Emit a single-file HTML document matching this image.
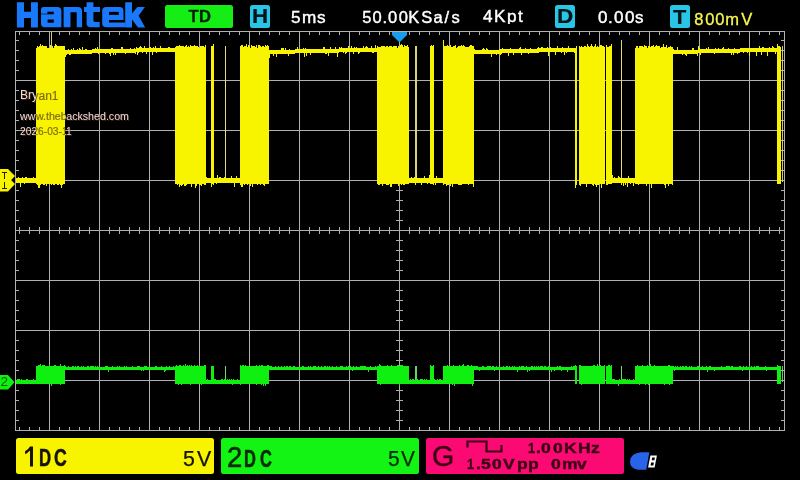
<!DOCTYPE html>
<html><head><meta charset="utf-8"><title>Hantek</title>
<style>
html,body{margin:0;padding:0;background:#000;}
body{width:800px;height:480px;position:relative;overflow:hidden;font-family:"Liberation Sans",sans-serif;}
.t{position:absolute;white-space:nowrap;line-height:1;transform-origin:0 0;}
#L{position:absolute;left:0;top:0;width:800px;height:480px;will-change:transform;}
.box{position:absolute;border-radius:2.5px;}
.wm{color:#f0d8e0;text-shadow:1px 1px 0 rgba(70,40,0,.9);}
</style></head><body><div id="L">
<svg width="800" height="480" viewBox="0 0 800 480" style="position:absolute;left:0;top:0"><g shape-rendering="crispEdges"><rect x="15" y="31" width="770" height="1" fill="#b0b0b0"/><rect x="15" y="430" width="770" height="1" fill="#b0b0b0"/><rect x="15" y="31" width="1" height="400" fill="#b0b0b0"/><rect x="784" y="31" width="1" height="400" fill="#b0b0b0"/><rect x="49" y="31" width="1" height="400" fill="#b0b0b0"/><rect x="99" y="31" width="1" height="400" fill="#b0b0b0"/><rect x="149" y="31" width="1" height="400" fill="#b0b0b0"/><rect x="199" y="31" width="1" height="400" fill="#b0b0b0"/><rect x="249" y="31" width="1" height="400" fill="#b0b0b0"/><rect x="299" y="31" width="1" height="400" fill="#b0b0b0"/><rect x="349" y="31" width="1" height="400" fill="#b0b0b0"/><rect x="399" y="31" width="1" height="400" fill="#b0b0b0"/><rect x="449" y="31" width="1" height="400" fill="#b0b0b0"/><rect x="499" y="31" width="1" height="400" fill="#b0b0b0"/><rect x="549" y="31" width="1" height="400" fill="#b0b0b0"/><rect x="599" y="31" width="1" height="400" fill="#b0b0b0"/><rect x="649" y="31" width="1" height="400" fill="#b0b0b0"/><rect x="699" y="31" width="1" height="400" fill="#b0b0b0"/><rect x="749" y="31" width="1" height="400" fill="#b0b0b0"/><rect x="15" y="80" width="770" height="1" fill="#b0b0b0"/><rect x="15" y="130" width="770" height="1" fill="#b0b0b0"/><rect x="15" y="180" width="770" height="1" fill="#b0b0b0"/><rect x="15" y="230" width="770" height="1" fill="#b0b0b0"/><rect x="15" y="280" width="770" height="1" fill="#b0b0b0"/><rect x="15" y="330" width="770" height="1" fill="#b0b0b0"/><rect x="15" y="380" width="770" height="1" fill="#b0b0b0"/><rect x="19" y="32" width="1" height="3" fill="#b0b0b0"/><rect x="19" y="427" width="1" height="3" fill="#b0b0b0"/><rect x="19" y="227" width="1" height="7" fill="#b0b0b0"/><rect x="29" y="32" width="1" height="3" fill="#b0b0b0"/><rect x="29" y="427" width="1" height="3" fill="#b0b0b0"/><rect x="29" y="227" width="1" height="7" fill="#b0b0b0"/><rect x="39" y="32" width="1" height="3" fill="#b0b0b0"/><rect x="39" y="427" width="1" height="3" fill="#b0b0b0"/><rect x="39" y="227" width="1" height="7" fill="#b0b0b0"/><rect x="49" y="32" width="1" height="3" fill="#b0b0b0"/><rect x="49" y="427" width="1" height="3" fill="#b0b0b0"/><rect x="49" y="227" width="1" height="7" fill="#b0b0b0"/><rect x="59" y="32" width="1" height="3" fill="#b0b0b0"/><rect x="59" y="427" width="1" height="3" fill="#b0b0b0"/><rect x="59" y="227" width="1" height="7" fill="#b0b0b0"/><rect x="69" y="32" width="1" height="3" fill="#b0b0b0"/><rect x="69" y="427" width="1" height="3" fill="#b0b0b0"/><rect x="69" y="227" width="1" height="7" fill="#b0b0b0"/><rect x="79" y="32" width="1" height="3" fill="#b0b0b0"/><rect x="79" y="427" width="1" height="3" fill="#b0b0b0"/><rect x="79" y="227" width="1" height="7" fill="#b0b0b0"/><rect x="89" y="32" width="1" height="3" fill="#b0b0b0"/><rect x="89" y="427" width="1" height="3" fill="#b0b0b0"/><rect x="89" y="227" width="1" height="7" fill="#b0b0b0"/><rect x="99" y="32" width="1" height="3" fill="#b0b0b0"/><rect x="99" y="427" width="1" height="3" fill="#b0b0b0"/><rect x="99" y="227" width="1" height="7" fill="#b0b0b0"/><rect x="109" y="32" width="1" height="3" fill="#b0b0b0"/><rect x="109" y="427" width="1" height="3" fill="#b0b0b0"/><rect x="109" y="227" width="1" height="7" fill="#b0b0b0"/><rect x="119" y="32" width="1" height="3" fill="#b0b0b0"/><rect x="119" y="427" width="1" height="3" fill="#b0b0b0"/><rect x="119" y="227" width="1" height="7" fill="#b0b0b0"/><rect x="129" y="32" width="1" height="3" fill="#b0b0b0"/><rect x="129" y="427" width="1" height="3" fill="#b0b0b0"/><rect x="129" y="227" width="1" height="7" fill="#b0b0b0"/><rect x="139" y="32" width="1" height="3" fill="#b0b0b0"/><rect x="139" y="427" width="1" height="3" fill="#b0b0b0"/><rect x="139" y="227" width="1" height="7" fill="#b0b0b0"/><rect x="149" y="32" width="1" height="3" fill="#b0b0b0"/><rect x="149" y="427" width="1" height="3" fill="#b0b0b0"/><rect x="149" y="227" width="1" height="7" fill="#b0b0b0"/><rect x="159" y="32" width="1" height="3" fill="#b0b0b0"/><rect x="159" y="427" width="1" height="3" fill="#b0b0b0"/><rect x="159" y="227" width="1" height="7" fill="#b0b0b0"/><rect x="169" y="32" width="1" height="3" fill="#b0b0b0"/><rect x="169" y="427" width="1" height="3" fill="#b0b0b0"/><rect x="169" y="227" width="1" height="7" fill="#b0b0b0"/><rect x="179" y="32" width="1" height="3" fill="#b0b0b0"/><rect x="179" y="427" width="1" height="3" fill="#b0b0b0"/><rect x="179" y="227" width="1" height="7" fill="#b0b0b0"/><rect x="189" y="32" width="1" height="3" fill="#b0b0b0"/><rect x="189" y="427" width="1" height="3" fill="#b0b0b0"/><rect x="189" y="227" width="1" height="7" fill="#b0b0b0"/><rect x="199" y="32" width="1" height="3" fill="#b0b0b0"/><rect x="199" y="427" width="1" height="3" fill="#b0b0b0"/><rect x="199" y="227" width="1" height="7" fill="#b0b0b0"/><rect x="209" y="32" width="1" height="3" fill="#b0b0b0"/><rect x="209" y="427" width="1" height="3" fill="#b0b0b0"/><rect x="209" y="227" width="1" height="7" fill="#b0b0b0"/><rect x="219" y="32" width="1" height="3" fill="#b0b0b0"/><rect x="219" y="427" width="1" height="3" fill="#b0b0b0"/><rect x="219" y="227" width="1" height="7" fill="#b0b0b0"/><rect x="229" y="32" width="1" height="3" fill="#b0b0b0"/><rect x="229" y="427" width="1" height="3" fill="#b0b0b0"/><rect x="229" y="227" width="1" height="7" fill="#b0b0b0"/><rect x="239" y="32" width="1" height="3" fill="#b0b0b0"/><rect x="239" y="427" width="1" height="3" fill="#b0b0b0"/><rect x="239" y="227" width="1" height="7" fill="#b0b0b0"/><rect x="249" y="32" width="1" height="3" fill="#b0b0b0"/><rect x="249" y="427" width="1" height="3" fill="#b0b0b0"/><rect x="249" y="227" width="1" height="7" fill="#b0b0b0"/><rect x="259" y="32" width="1" height="3" fill="#b0b0b0"/><rect x="259" y="427" width="1" height="3" fill="#b0b0b0"/><rect x="259" y="227" width="1" height="7" fill="#b0b0b0"/><rect x="269" y="32" width="1" height="3" fill="#b0b0b0"/><rect x="269" y="427" width="1" height="3" fill="#b0b0b0"/><rect x="269" y="227" width="1" height="7" fill="#b0b0b0"/><rect x="279" y="32" width="1" height="3" fill="#b0b0b0"/><rect x="279" y="427" width="1" height="3" fill="#b0b0b0"/><rect x="279" y="227" width="1" height="7" fill="#b0b0b0"/><rect x="289" y="32" width="1" height="3" fill="#b0b0b0"/><rect x="289" y="427" width="1" height="3" fill="#b0b0b0"/><rect x="289" y="227" width="1" height="7" fill="#b0b0b0"/><rect x="299" y="32" width="1" height="3" fill="#b0b0b0"/><rect x="299" y="427" width="1" height="3" fill="#b0b0b0"/><rect x="299" y="227" width="1" height="7" fill="#b0b0b0"/><rect x="309" y="32" width="1" height="3" fill="#b0b0b0"/><rect x="309" y="427" width="1" height="3" fill="#b0b0b0"/><rect x="309" y="227" width="1" height="7" fill="#b0b0b0"/><rect x="319" y="32" width="1" height="3" fill="#b0b0b0"/><rect x="319" y="427" width="1" height="3" fill="#b0b0b0"/><rect x="319" y="227" width="1" height="7" fill="#b0b0b0"/><rect x="329" y="32" width="1" height="3" fill="#b0b0b0"/><rect x="329" y="427" width="1" height="3" fill="#b0b0b0"/><rect x="329" y="227" width="1" height="7" fill="#b0b0b0"/><rect x="339" y="32" width="1" height="3" fill="#b0b0b0"/><rect x="339" y="427" width="1" height="3" fill="#b0b0b0"/><rect x="339" y="227" width="1" height="7" fill="#b0b0b0"/><rect x="349" y="32" width="1" height="3" fill="#b0b0b0"/><rect x="349" y="427" width="1" height="3" fill="#b0b0b0"/><rect x="349" y="227" width="1" height="7" fill="#b0b0b0"/><rect x="359" y="32" width="1" height="3" fill="#b0b0b0"/><rect x="359" y="427" width="1" height="3" fill="#b0b0b0"/><rect x="359" y="227" width="1" height="7" fill="#b0b0b0"/><rect x="369" y="32" width="1" height="3" fill="#b0b0b0"/><rect x="369" y="427" width="1" height="3" fill="#b0b0b0"/><rect x="369" y="227" width="1" height="7" fill="#b0b0b0"/><rect x="379" y="32" width="1" height="3" fill="#b0b0b0"/><rect x="379" y="427" width="1" height="3" fill="#b0b0b0"/><rect x="379" y="227" width="1" height="7" fill="#b0b0b0"/><rect x="389" y="32" width="1" height="3" fill="#b0b0b0"/><rect x="389" y="427" width="1" height="3" fill="#b0b0b0"/><rect x="389" y="227" width="1" height="7" fill="#b0b0b0"/><rect x="399" y="32" width="1" height="3" fill="#b0b0b0"/><rect x="399" y="427" width="1" height="3" fill="#b0b0b0"/><rect x="399" y="227" width="1" height="7" fill="#b0b0b0"/><rect x="409" y="32" width="1" height="3" fill="#b0b0b0"/><rect x="409" y="427" width="1" height="3" fill="#b0b0b0"/><rect x="409" y="227" width="1" height="7" fill="#b0b0b0"/><rect x="419" y="32" width="1" height="3" fill="#b0b0b0"/><rect x="419" y="427" width="1" height="3" fill="#b0b0b0"/><rect x="419" y="227" width="1" height="7" fill="#b0b0b0"/><rect x="429" y="32" width="1" height="3" fill="#b0b0b0"/><rect x="429" y="427" width="1" height="3" fill="#b0b0b0"/><rect x="429" y="227" width="1" height="7" fill="#b0b0b0"/><rect x="439" y="32" width="1" height="3" fill="#b0b0b0"/><rect x="439" y="427" width="1" height="3" fill="#b0b0b0"/><rect x="439" y="227" width="1" height="7" fill="#b0b0b0"/><rect x="449" y="32" width="1" height="3" fill="#b0b0b0"/><rect x="449" y="427" width="1" height="3" fill="#b0b0b0"/><rect x="449" y="227" width="1" height="7" fill="#b0b0b0"/><rect x="459" y="32" width="1" height="3" fill="#b0b0b0"/><rect x="459" y="427" width="1" height="3" fill="#b0b0b0"/><rect x="459" y="227" width="1" height="7" fill="#b0b0b0"/><rect x="469" y="32" width="1" height="3" fill="#b0b0b0"/><rect x="469" y="427" width="1" height="3" fill="#b0b0b0"/><rect x="469" y="227" width="1" height="7" fill="#b0b0b0"/><rect x="479" y="32" width="1" height="3" fill="#b0b0b0"/><rect x="479" y="427" width="1" height="3" fill="#b0b0b0"/><rect x="479" y="227" width="1" height="7" fill="#b0b0b0"/><rect x="489" y="32" width="1" height="3" fill="#b0b0b0"/><rect x="489" y="427" width="1" height="3" fill="#b0b0b0"/><rect x="489" y="227" width="1" height="7" fill="#b0b0b0"/><rect x="499" y="32" width="1" height="3" fill="#b0b0b0"/><rect x="499" y="427" width="1" height="3" fill="#b0b0b0"/><rect x="499" y="227" width="1" height="7" fill="#b0b0b0"/><rect x="509" y="32" width="1" height="3" fill="#b0b0b0"/><rect x="509" y="427" width="1" height="3" fill="#b0b0b0"/><rect x="509" y="227" width="1" height="7" fill="#b0b0b0"/><rect x="519" y="32" width="1" height="3" fill="#b0b0b0"/><rect x="519" y="427" width="1" height="3" fill="#b0b0b0"/><rect x="519" y="227" width="1" height="7" fill="#b0b0b0"/><rect x="529" y="32" width="1" height="3" fill="#b0b0b0"/><rect x="529" y="427" width="1" height="3" fill="#b0b0b0"/><rect x="529" y="227" width="1" height="7" fill="#b0b0b0"/><rect x="539" y="32" width="1" height="3" fill="#b0b0b0"/><rect x="539" y="427" width="1" height="3" fill="#b0b0b0"/><rect x="539" y="227" width="1" height="7" fill="#b0b0b0"/><rect x="549" y="32" width="1" height="3" fill="#b0b0b0"/><rect x="549" y="427" width="1" height="3" fill="#b0b0b0"/><rect x="549" y="227" width="1" height="7" fill="#b0b0b0"/><rect x="559" y="32" width="1" height="3" fill="#b0b0b0"/><rect x="559" y="427" width="1" height="3" fill="#b0b0b0"/><rect x="559" y="227" width="1" height="7" fill="#b0b0b0"/><rect x="569" y="32" width="1" height="3" fill="#b0b0b0"/><rect x="569" y="427" width="1" height="3" fill="#b0b0b0"/><rect x="569" y="227" width="1" height="7" fill="#b0b0b0"/><rect x="579" y="32" width="1" height="3" fill="#b0b0b0"/><rect x="579" y="427" width="1" height="3" fill="#b0b0b0"/><rect x="579" y="227" width="1" height="7" fill="#b0b0b0"/><rect x="589" y="32" width="1" height="3" fill="#b0b0b0"/><rect x="589" y="427" width="1" height="3" fill="#b0b0b0"/><rect x="589" y="227" width="1" height="7" fill="#b0b0b0"/><rect x="599" y="32" width="1" height="3" fill="#b0b0b0"/><rect x="599" y="427" width="1" height="3" fill="#b0b0b0"/><rect x="599" y="227" width="1" height="7" fill="#b0b0b0"/><rect x="609" y="32" width="1" height="3" fill="#b0b0b0"/><rect x="609" y="427" width="1" height="3" fill="#b0b0b0"/><rect x="609" y="227" width="1" height="7" fill="#b0b0b0"/><rect x="619" y="32" width="1" height="3" fill="#b0b0b0"/><rect x="619" y="427" width="1" height="3" fill="#b0b0b0"/><rect x="619" y="227" width="1" height="7" fill="#b0b0b0"/><rect x="629" y="32" width="1" height="3" fill="#b0b0b0"/><rect x="629" y="427" width="1" height="3" fill="#b0b0b0"/><rect x="629" y="227" width="1" height="7" fill="#b0b0b0"/><rect x="639" y="32" width="1" height="3" fill="#b0b0b0"/><rect x="639" y="427" width="1" height="3" fill="#b0b0b0"/><rect x="639" y="227" width="1" height="7" fill="#b0b0b0"/><rect x="649" y="32" width="1" height="3" fill="#b0b0b0"/><rect x="649" y="427" width="1" height="3" fill="#b0b0b0"/><rect x="649" y="227" width="1" height="7" fill="#b0b0b0"/><rect x="659" y="32" width="1" height="3" fill="#b0b0b0"/><rect x="659" y="427" width="1" height="3" fill="#b0b0b0"/><rect x="659" y="227" width="1" height="7" fill="#b0b0b0"/><rect x="669" y="32" width="1" height="3" fill="#b0b0b0"/><rect x="669" y="427" width="1" height="3" fill="#b0b0b0"/><rect x="669" y="227" width="1" height="7" fill="#b0b0b0"/><rect x="679" y="32" width="1" height="3" fill="#b0b0b0"/><rect x="679" y="427" width="1" height="3" fill="#b0b0b0"/><rect x="679" y="227" width="1" height="7" fill="#b0b0b0"/><rect x="689" y="32" width="1" height="3" fill="#b0b0b0"/><rect x="689" y="427" width="1" height="3" fill="#b0b0b0"/><rect x="689" y="227" width="1" height="7" fill="#b0b0b0"/><rect x="699" y="32" width="1" height="3" fill="#b0b0b0"/><rect x="699" y="427" width="1" height="3" fill="#b0b0b0"/><rect x="699" y="227" width="1" height="7" fill="#b0b0b0"/><rect x="709" y="32" width="1" height="3" fill="#b0b0b0"/><rect x="709" y="427" width="1" height="3" fill="#b0b0b0"/><rect x="709" y="227" width="1" height="7" fill="#b0b0b0"/><rect x="719" y="32" width="1" height="3" fill="#b0b0b0"/><rect x="719" y="427" width="1" height="3" fill="#b0b0b0"/><rect x="719" y="227" width="1" height="7" fill="#b0b0b0"/><rect x="729" y="32" width="1" height="3" fill="#b0b0b0"/><rect x="729" y="427" width="1" height="3" fill="#b0b0b0"/><rect x="729" y="227" width="1" height="7" fill="#b0b0b0"/><rect x="739" y="32" width="1" height="3" fill="#b0b0b0"/><rect x="739" y="427" width="1" height="3" fill="#b0b0b0"/><rect x="739" y="227" width="1" height="7" fill="#b0b0b0"/><rect x="749" y="32" width="1" height="3" fill="#b0b0b0"/><rect x="749" y="427" width="1" height="3" fill="#b0b0b0"/><rect x="749" y="227" width="1" height="7" fill="#b0b0b0"/><rect x="759" y="32" width="1" height="3" fill="#b0b0b0"/><rect x="759" y="427" width="1" height="3" fill="#b0b0b0"/><rect x="759" y="227" width="1" height="7" fill="#b0b0b0"/><rect x="769" y="32" width="1" height="3" fill="#b0b0b0"/><rect x="769" y="427" width="1" height="3" fill="#b0b0b0"/><rect x="769" y="227" width="1" height="7" fill="#b0b0b0"/><rect x="779" y="32" width="1" height="3" fill="#b0b0b0"/><rect x="779" y="427" width="1" height="3" fill="#b0b0b0"/><rect x="779" y="227" width="1" height="7" fill="#b0b0b0"/><rect x="16" y="40" width="3" height="1" fill="#b0b0b0"/><rect x="781" y="40" width="3" height="1" fill="#b0b0b0"/><rect x="16" y="50" width="3" height="1" fill="#b0b0b0"/><rect x="781" y="50" width="3" height="1" fill="#b0b0b0"/><rect x="396" y="50" width="7" height="1" fill="#b0b0b0"/><rect x="16" y="60" width="3" height="1" fill="#b0b0b0"/><rect x="781" y="60" width="3" height="1" fill="#b0b0b0"/><rect x="396" y="60" width="7" height="1" fill="#b0b0b0"/><rect x="16" y="70" width="3" height="1" fill="#b0b0b0"/><rect x="781" y="70" width="3" height="1" fill="#b0b0b0"/><rect x="396" y="70" width="7" height="1" fill="#b0b0b0"/><rect x="16" y="80" width="3" height="1" fill="#b0b0b0"/><rect x="781" y="80" width="3" height="1" fill="#b0b0b0"/><rect x="396" y="80" width="7" height="1" fill="#b0b0b0"/><rect x="16" y="90" width="3" height="1" fill="#b0b0b0"/><rect x="781" y="90" width="3" height="1" fill="#b0b0b0"/><rect x="396" y="90" width="7" height="1" fill="#b0b0b0"/><rect x="16" y="100" width="3" height="1" fill="#b0b0b0"/><rect x="781" y="100" width="3" height="1" fill="#b0b0b0"/><rect x="396" y="100" width="7" height="1" fill="#b0b0b0"/><rect x="16" y="110" width="3" height="1" fill="#b0b0b0"/><rect x="781" y="110" width="3" height="1" fill="#b0b0b0"/><rect x="396" y="110" width="7" height="1" fill="#b0b0b0"/><rect x="16" y="120" width="3" height="1" fill="#b0b0b0"/><rect x="781" y="120" width="3" height="1" fill="#b0b0b0"/><rect x="396" y="120" width="7" height="1" fill="#b0b0b0"/><rect x="16" y="130" width="3" height="1" fill="#b0b0b0"/><rect x="781" y="130" width="3" height="1" fill="#b0b0b0"/><rect x="396" y="130" width="7" height="1" fill="#b0b0b0"/><rect x="16" y="140" width="3" height="1" fill="#b0b0b0"/><rect x="781" y="140" width="3" height="1" fill="#b0b0b0"/><rect x="396" y="140" width="7" height="1" fill="#b0b0b0"/><rect x="16" y="150" width="3" height="1" fill="#b0b0b0"/><rect x="781" y="150" width="3" height="1" fill="#b0b0b0"/><rect x="396" y="150" width="7" height="1" fill="#b0b0b0"/><rect x="16" y="160" width="3" height="1" fill="#b0b0b0"/><rect x="781" y="160" width="3" height="1" fill="#b0b0b0"/><rect x="396" y="160" width="7" height="1" fill="#b0b0b0"/><rect x="16" y="170" width="3" height="1" fill="#b0b0b0"/><rect x="781" y="170" width="3" height="1" fill="#b0b0b0"/><rect x="396" y="170" width="7" height="1" fill="#b0b0b0"/><rect x="16" y="180" width="3" height="1" fill="#b0b0b0"/><rect x="781" y="180" width="3" height="1" fill="#b0b0b0"/><rect x="396" y="180" width="7" height="1" fill="#b0b0b0"/><rect x="16" y="190" width="3" height="1" fill="#b0b0b0"/><rect x="781" y="190" width="3" height="1" fill="#b0b0b0"/><rect x="396" y="190" width="7" height="1" fill="#b0b0b0"/><rect x="16" y="200" width="3" height="1" fill="#b0b0b0"/><rect x="781" y="200" width="3" height="1" fill="#b0b0b0"/><rect x="396" y="200" width="7" height="1" fill="#b0b0b0"/><rect x="16" y="210" width="3" height="1" fill="#b0b0b0"/><rect x="781" y="210" width="3" height="1" fill="#b0b0b0"/><rect x="396" y="210" width="7" height="1" fill="#b0b0b0"/><rect x="16" y="220" width="3" height="1" fill="#b0b0b0"/><rect x="781" y="220" width="3" height="1" fill="#b0b0b0"/><rect x="396" y="220" width="7" height="1" fill="#b0b0b0"/><rect x="16" y="230" width="3" height="1" fill="#b0b0b0"/><rect x="781" y="230" width="3" height="1" fill="#b0b0b0"/><rect x="396" y="230" width="7" height="1" fill="#b0b0b0"/><rect x="16" y="240" width="3" height="1" fill="#b0b0b0"/><rect x="781" y="240" width="3" height="1" fill="#b0b0b0"/><rect x="396" y="240" width="7" height="1" fill="#b0b0b0"/><rect x="16" y="250" width="3" height="1" fill="#b0b0b0"/><rect x="781" y="250" width="3" height="1" fill="#b0b0b0"/><rect x="396" y="250" width="7" height="1" fill="#b0b0b0"/><rect x="16" y="260" width="3" height="1" fill="#b0b0b0"/><rect x="781" y="260" width="3" height="1" fill="#b0b0b0"/><rect x="396" y="260" width="7" height="1" fill="#b0b0b0"/><rect x="16" y="270" width="3" height="1" fill="#b0b0b0"/><rect x="781" y="270" width="3" height="1" fill="#b0b0b0"/><rect x="396" y="270" width="7" height="1" fill="#b0b0b0"/><rect x="16" y="280" width="3" height="1" fill="#b0b0b0"/><rect x="781" y="280" width="3" height="1" fill="#b0b0b0"/><rect x="396" y="280" width="7" height="1" fill="#b0b0b0"/><rect x="16" y="290" width="3" height="1" fill="#b0b0b0"/><rect x="781" y="290" width="3" height="1" fill="#b0b0b0"/><rect x="396" y="290" width="7" height="1" fill="#b0b0b0"/><rect x="16" y="300" width="3" height="1" fill="#b0b0b0"/><rect x="781" y="300" width="3" height="1" fill="#b0b0b0"/><rect x="396" y="300" width="7" height="1" fill="#b0b0b0"/><rect x="16" y="310" width="3" height="1" fill="#b0b0b0"/><rect x="781" y="310" width="3" height="1" fill="#b0b0b0"/><rect x="396" y="310" width="7" height="1" fill="#b0b0b0"/><rect x="16" y="320" width="3" height="1" fill="#b0b0b0"/><rect x="781" y="320" width="3" height="1" fill="#b0b0b0"/><rect x="396" y="320" width="7" height="1" fill="#b0b0b0"/><rect x="16" y="330" width="3" height="1" fill="#b0b0b0"/><rect x="781" y="330" width="3" height="1" fill="#b0b0b0"/><rect x="396" y="330" width="7" height="1" fill="#b0b0b0"/><rect x="16" y="340" width="3" height="1" fill="#b0b0b0"/><rect x="781" y="340" width="3" height="1" fill="#b0b0b0"/><rect x="396" y="340" width="7" height="1" fill="#b0b0b0"/><rect x="16" y="350" width="3" height="1" fill="#b0b0b0"/><rect x="781" y="350" width="3" height="1" fill="#b0b0b0"/><rect x="396" y="350" width="7" height="1" fill="#b0b0b0"/><rect x="16" y="360" width="3" height="1" fill="#b0b0b0"/><rect x="781" y="360" width="3" height="1" fill="#b0b0b0"/><rect x="396" y="360" width="7" height="1" fill="#b0b0b0"/><rect x="16" y="370" width="3" height="1" fill="#b0b0b0"/><rect x="781" y="370" width="3" height="1" fill="#b0b0b0"/><rect x="396" y="370" width="7" height="1" fill="#b0b0b0"/><rect x="16" y="380" width="3" height="1" fill="#b0b0b0"/><rect x="781" y="380" width="3" height="1" fill="#b0b0b0"/><rect x="396" y="380" width="7" height="1" fill="#b0b0b0"/><rect x="16" y="390" width="3" height="1" fill="#b0b0b0"/><rect x="781" y="390" width="3" height="1" fill="#b0b0b0"/><rect x="396" y="390" width="7" height="1" fill="#b0b0b0"/><rect x="16" y="400" width="3" height="1" fill="#b0b0b0"/><rect x="781" y="400" width="3" height="1" fill="#b0b0b0"/><rect x="396" y="400" width="7" height="1" fill="#b0b0b0"/><rect x="16" y="410" width="3" height="1" fill="#b0b0b0"/><rect x="781" y="410" width="3" height="1" fill="#b0b0b0"/><rect x="396" y="410" width="7" height="1" fill="#b0b0b0"/><rect x="16" y="420" width="3" height="1" fill="#b0b0b0"/><rect x="781" y="420" width="3" height="1" fill="#b0b0b0"/><rect x="396" y="420" width="7" height="1" fill="#b0b0b0"/></g><g shape-rendering="crispEdges"><rect x="225" y="46" width="1" height="136" fill="#e2de80" opacity="1"/><rect x="415" y="46" width="2" height="136" fill="#e2de80" opacity="0.95"/><rect x="621" y="46" width="1" height="136" fill="#e2de80" opacity="1"/><rect x="782" y="46" width="1" height="136" fill="#e2de80" opacity="0.9"/><rect x="65" y="50" width="1" height="7" fill="#f8f400"/><rect x="66" y="50" width="1" height="5" fill="#f8f400"/><rect x="67" y="50" width="1" height="4" fill="#f8f400"/><rect x="68" y="49" width="1" height="5" fill="#f8f400"/><rect x="69" y="50" width="1" height="5" fill="#f8f400"/><rect x="70" y="50" width="1" height="5" fill="#f8f400"/><rect x="71" y="49" width="1" height="5" fill="#f8f400"/><rect x="72" y="50" width="1" height="4" fill="#f8f400"/><rect x="73" y="48" width="1" height="6" fill="#f8f400"/><rect x="74" y="50" width="1" height="4" fill="#f8f400"/><rect x="75" y="50" width="1" height="4" fill="#f8f400"/><rect x="76" y="50" width="1" height="4" fill="#f8f400"/><rect x="77" y="49" width="1" height="5" fill="#f8f400"/><rect x="78" y="50" width="1" height="4" fill="#f8f400"/><rect x="79" y="48" width="1" height="6" fill="#f8f400"/><rect x="80" y="49" width="1" height="5" fill="#f8f400"/><rect x="81" y="50" width="1" height="4" fill="#f8f400"/><rect x="82" y="47" width="1" height="7" fill="#f8f400"/><rect x="83" y="50" width="1" height="4" fill="#f8f400"/><rect x="84" y="50" width="1" height="4" fill="#f8f400"/><rect x="85" y="49" width="1" height="5" fill="#f8f400"/><rect x="86" y="49" width="1" height="5" fill="#f8f400"/><rect x="87" y="50" width="1" height="4" fill="#f8f400"/><rect x="88" y="50" width="1" height="4" fill="#f8f400"/><rect x="89" y="50" width="1" height="4" fill="#f8f400"/><rect x="90" y="50" width="1" height="4" fill="#f8f400"/><rect x="91" y="50" width="1" height="4" fill="#f8f400"/><rect x="92" y="49" width="1" height="4" fill="#f8f400"/><rect x="93" y="49" width="1" height="4" fill="#f8f400"/><rect x="94" y="49" width="1" height="4" fill="#f8f400"/><rect x="95" y="48" width="1" height="5" fill="#f8f400"/><rect x="96" y="49" width="1" height="4" fill="#f8f400"/><rect x="97" y="47" width="1" height="6" fill="#f8f400"/><rect x="98" y="49" width="1" height="5" fill="#f8f400"/><rect x="99" y="49" width="1" height="4" fill="#f8f400"/><rect x="100" y="49" width="1" height="4" fill="#f8f400"/><rect x="101" y="49" width="1" height="4" fill="#f8f400"/><rect x="102" y="49" width="1" height="4" fill="#f8f400"/><rect x="103" y="49" width="1" height="4" fill="#f8f400"/><rect x="104" y="49" width="1" height="4" fill="#f8f400"/><rect x="105" y="49" width="1" height="5" fill="#f8f400"/><rect x="106" y="49" width="1" height="4" fill="#f8f400"/><rect x="107" y="49" width="1" height="4" fill="#f8f400"/><rect x="108" y="49" width="1" height="4" fill="#f8f400"/><rect x="109" y="49" width="1" height="5" fill="#f8f400"/><rect x="110" y="49" width="1" height="7" fill="#f8f400"/><rect x="111" y="48" width="1" height="5" fill="#f8f400"/><rect x="112" y="48" width="1" height="5" fill="#f8f400"/><rect x="113" y="49" width="1" height="6" fill="#f8f400"/><rect x="114" y="49" width="1" height="4" fill="#f8f400"/><rect x="115" y="49" width="1" height="6" fill="#f8f400"/><rect x="116" y="49" width="1" height="4" fill="#f8f400"/><rect x="117" y="49" width="1" height="4" fill="#f8f400"/><rect x="118" y="49" width="1" height="4" fill="#f8f400"/><rect x="119" y="49" width="1" height="4" fill="#f8f400"/><rect x="120" y="49" width="1" height="4" fill="#f8f400"/><rect x="121" y="47" width="1" height="6" fill="#f8f400"/><rect x="122" y="47" width="1" height="6" fill="#f8f400"/><rect x="123" y="49" width="1" height="4" fill="#f8f400"/><rect x="124" y="49" width="1" height="4" fill="#f8f400"/><rect x="125" y="49" width="1" height="5" fill="#f8f400"/><rect x="126" y="49" width="1" height="4" fill="#f8f400"/><rect x="127" y="49" width="1" height="4" fill="#f8f400"/><rect x="128" y="49" width="1" height="4" fill="#f8f400"/><rect x="129" y="49" width="1" height="4" fill="#f8f400"/><rect x="130" y="48" width="1" height="5" fill="#f8f400"/><rect x="131" y="49" width="1" height="4" fill="#f8f400"/><rect x="132" y="49" width="1" height="4" fill="#f8f400"/><rect x="133" y="49" width="1" height="4" fill="#f8f400"/><rect x="134" y="48" width="1" height="5" fill="#f8f400"/><rect x="135" y="49" width="1" height="5" fill="#f8f400"/><rect x="136" y="47" width="1" height="5" fill="#f8f400"/><rect x="137" y="48" width="1" height="7" fill="#f8f400"/><rect x="138" y="48" width="1" height="5" fill="#f8f400"/><rect x="139" y="47" width="1" height="5" fill="#f8f400"/><rect x="140" y="46" width="1" height="6" fill="#f8f400"/><rect x="141" y="47" width="1" height="5" fill="#f8f400"/><rect x="142" y="48" width="1" height="5" fill="#f8f400"/><rect x="143" y="48" width="1" height="4" fill="#f8f400"/><rect x="144" y="46" width="1" height="6" fill="#f8f400"/><rect x="145" y="48" width="1" height="4" fill="#f8f400"/><rect x="146" y="48" width="1" height="6" fill="#f8f400"/><rect x="147" y="48" width="1" height="4" fill="#f8f400"/><rect x="148" y="48" width="1" height="4" fill="#f8f400"/><rect x="149" y="47" width="1" height="5" fill="#f8f400"/><rect x="150" y="47" width="1" height="5" fill="#f8f400"/><rect x="151" y="48" width="1" height="4" fill="#f8f400"/><rect x="152" y="48" width="1" height="7" fill="#f8f400"/><rect x="153" y="47" width="1" height="5" fill="#f8f400"/><rect x="154" y="48" width="1" height="4" fill="#f8f400"/><rect x="155" y="46" width="1" height="6" fill="#f8f400"/><rect x="156" y="48" width="1" height="5" fill="#f8f400"/><rect x="157" y="48" width="1" height="4" fill="#f8f400"/><rect x="158" y="48" width="1" height="4" fill="#f8f400"/><rect x="159" y="48" width="1" height="4" fill="#f8f400"/><rect x="160" y="46" width="1" height="6" fill="#f8f400"/><rect x="161" y="48" width="1" height="4" fill="#f8f400"/><rect x="162" y="48" width="1" height="4" fill="#f8f400"/><rect x="163" y="48" width="1" height="4" fill="#f8f400"/><rect x="164" y="48" width="1" height="4" fill="#f8f400"/><rect x="165" y="48" width="1" height="4" fill="#f8f400"/><rect x="166" y="48" width="1" height="4" fill="#f8f400"/><rect x="167" y="48" width="1" height="4" fill="#f8f400"/><rect x="168" y="47" width="1" height="5" fill="#f8f400"/><rect x="169" y="47" width="1" height="5" fill="#f8f400"/><rect x="170" y="48" width="1" height="4" fill="#f8f400"/><rect x="171" y="48" width="1" height="4" fill="#f8f400"/><rect x="172" y="48" width="1" height="4" fill="#f8f400"/><rect x="173" y="48" width="1" height="4" fill="#f8f400"/><rect x="174" y="48" width="1" height="4" fill="#f8f400"/><rect x="269" y="50" width="1" height="8" fill="#f8f400"/><rect x="270" y="50" width="1" height="4" fill="#f8f400"/><rect x="271" y="50" width="1" height="4" fill="#f8f400"/><rect x="272" y="50" width="1" height="4" fill="#f8f400"/><rect x="273" y="50" width="1" height="6" fill="#f8f400"/><rect x="274" y="50" width="1" height="4" fill="#f8f400"/><rect x="275" y="50" width="1" height="4" fill="#f8f400"/><rect x="276" y="50" width="1" height="7" fill="#f8f400"/><rect x="277" y="50" width="1" height="4" fill="#f8f400"/><rect x="278" y="50" width="1" height="4" fill="#f8f400"/><rect x="279" y="50" width="1" height="4" fill="#f8f400"/><rect x="280" y="50" width="1" height="4" fill="#f8f400"/><rect x="281" y="48" width="1" height="6" fill="#f8f400"/><rect x="282" y="48" width="1" height="6" fill="#f8f400"/><rect x="283" y="48" width="1" height="6" fill="#f8f400"/><rect x="284" y="50" width="1" height="4" fill="#f8f400"/><rect x="285" y="48" width="1" height="6" fill="#f8f400"/><rect x="286" y="50" width="1" height="4" fill="#f8f400"/><rect x="287" y="50" width="1" height="4" fill="#f8f400"/><rect x="288" y="50" width="1" height="6" fill="#f8f400"/><rect x="289" y="49" width="1" height="5" fill="#f8f400"/><rect x="290" y="50" width="1" height="4" fill="#f8f400"/><rect x="291" y="50" width="1" height="4" fill="#f8f400"/><rect x="292" y="50" width="1" height="4" fill="#f8f400"/><rect x="293" y="50" width="1" height="4" fill="#f8f400"/><rect x="294" y="50" width="1" height="4" fill="#f8f400"/><rect x="295" y="49" width="1" height="4" fill="#f8f400"/><rect x="296" y="49" width="1" height="4" fill="#f8f400"/><rect x="297" y="47" width="1" height="6" fill="#f8f400"/><rect x="298" y="49" width="1" height="4" fill="#f8f400"/><rect x="299" y="49" width="1" height="4" fill="#f8f400"/><rect x="300" y="49" width="1" height="4" fill="#f8f400"/><rect x="301" y="49" width="1" height="4" fill="#f8f400"/><rect x="302" y="49" width="1" height="4" fill="#f8f400"/><rect x="303" y="48" width="1" height="5" fill="#f8f400"/><rect x="304" y="49" width="1" height="8" fill="#f8f400"/><rect x="305" y="48" width="1" height="5" fill="#f8f400"/><rect x="306" y="49" width="1" height="7" fill="#f8f400"/><rect x="307" y="49" width="1" height="4" fill="#f8f400"/><rect x="308" y="49" width="1" height="4" fill="#f8f400"/><rect x="309" y="49" width="1" height="4" fill="#f8f400"/><rect x="310" y="49" width="1" height="6" fill="#f8f400"/><rect x="311" y="49" width="1" height="4" fill="#f8f400"/><rect x="312" y="49" width="1" height="4" fill="#f8f400"/><rect x="313" y="49" width="1" height="4" fill="#f8f400"/><rect x="314" y="49" width="1" height="4" fill="#f8f400"/><rect x="315" y="49" width="1" height="4" fill="#f8f400"/><rect x="316" y="49" width="1" height="4" fill="#f8f400"/><rect x="317" y="49" width="1" height="4" fill="#f8f400"/><rect x="318" y="49" width="1" height="4" fill="#f8f400"/><rect x="319" y="49" width="1" height="4" fill="#f8f400"/><rect x="320" y="49" width="1" height="4" fill="#f8f400"/><rect x="321" y="49" width="1" height="4" fill="#f8f400"/><rect x="322" y="49" width="1" height="4" fill="#f8f400"/><rect x="323" y="47" width="1" height="6" fill="#f8f400"/><rect x="324" y="47" width="1" height="6" fill="#f8f400"/><rect x="325" y="49" width="1" height="5" fill="#f8f400"/><rect x="326" y="49" width="1" height="5" fill="#f8f400"/><rect x="327" y="49" width="1" height="4" fill="#f8f400"/><rect x="328" y="49" width="1" height="7" fill="#f8f400"/><rect x="329" y="49" width="1" height="4" fill="#f8f400"/><rect x="330" y="47" width="1" height="6" fill="#f8f400"/><rect x="331" y="49" width="1" height="4" fill="#f8f400"/><rect x="332" y="49" width="1" height="4" fill="#f8f400"/><rect x="333" y="49" width="1" height="4" fill="#f8f400"/><rect x="334" y="49" width="1" height="4" fill="#f8f400"/><rect x="335" y="47" width="1" height="6" fill="#f8f400"/><rect x="336" y="49" width="1" height="4" fill="#f8f400"/><rect x="337" y="49" width="1" height="8" fill="#f8f400"/><rect x="338" y="49" width="1" height="4" fill="#f8f400"/><rect x="339" y="47" width="1" height="5" fill="#f8f400"/><rect x="340" y="48" width="1" height="4" fill="#f8f400"/><rect x="341" y="47" width="1" height="5" fill="#f8f400"/><rect x="342" y="48" width="1" height="4" fill="#f8f400"/><rect x="343" y="48" width="1" height="5" fill="#f8f400"/><rect x="344" y="48" width="1" height="4" fill="#f8f400"/><rect x="345" y="48" width="1" height="6" fill="#f8f400"/><rect x="346" y="48" width="1" height="5" fill="#f8f400"/><rect x="347" y="48" width="1" height="4" fill="#f8f400"/><rect x="348" y="46" width="1" height="6" fill="#f8f400"/><rect x="349" y="48" width="1" height="4" fill="#f8f400"/><rect x="350" y="48" width="1" height="4" fill="#f8f400"/><rect x="351" y="46" width="1" height="6" fill="#f8f400"/><rect x="352" y="48" width="1" height="4" fill="#f8f400"/><rect x="353" y="48" width="1" height="6" fill="#f8f400"/><rect x="354" y="47" width="1" height="5" fill="#f8f400"/><rect x="355" y="48" width="1" height="4" fill="#f8f400"/><rect x="356" y="47" width="1" height="5" fill="#f8f400"/><rect x="357" y="48" width="1" height="4" fill="#f8f400"/><rect x="358" y="48" width="1" height="6" fill="#f8f400"/><rect x="359" y="48" width="1" height="5" fill="#f8f400"/><rect x="360" y="48" width="1" height="4" fill="#f8f400"/><rect x="361" y="48" width="1" height="4" fill="#f8f400"/><rect x="362" y="48" width="1" height="4" fill="#f8f400"/><rect x="363" y="46" width="1" height="6" fill="#f8f400"/><rect x="364" y="48" width="1" height="4" fill="#f8f400"/><rect x="365" y="47" width="1" height="5" fill="#f8f400"/><rect x="366" y="46" width="1" height="6" fill="#f8f400"/><rect x="367" y="47" width="1" height="5" fill="#f8f400"/><rect x="368" y="48" width="1" height="4" fill="#f8f400"/><rect x="369" y="48" width="1" height="4" fill="#f8f400"/><rect x="370" y="48" width="1" height="4" fill="#f8f400"/><rect x="371" y="46" width="1" height="6" fill="#f8f400"/><rect x="372" y="48" width="1" height="5" fill="#f8f400"/><rect x="373" y="48" width="1" height="5" fill="#f8f400"/><rect x="374" y="48" width="1" height="4" fill="#f8f400"/><rect x="375" y="45" width="1" height="7" fill="#f8f400"/><rect x="376" y="48" width="1" height="4" fill="#f8f400"/><rect x="474" y="49" width="1" height="5" fill="#f8f400"/><rect x="475" y="50" width="1" height="4" fill="#f8f400"/><rect x="476" y="50" width="1" height="4" fill="#f8f400"/><rect x="477" y="50" width="1" height="4" fill="#f8f400"/><rect x="478" y="50" width="1" height="4" fill="#f8f400"/><rect x="479" y="50" width="1" height="4" fill="#f8f400"/><rect x="480" y="50" width="1" height="4" fill="#f8f400"/><rect x="481" y="50" width="1" height="4" fill="#f8f400"/><rect x="482" y="49" width="1" height="5" fill="#f8f400"/><rect x="483" y="48" width="1" height="6" fill="#f8f400"/><rect x="484" y="49" width="1" height="5" fill="#f8f400"/><rect x="485" y="50" width="1" height="4" fill="#f8f400"/><rect x="486" y="48" width="1" height="6" fill="#f8f400"/><rect x="487" y="49" width="1" height="5" fill="#f8f400"/><rect x="488" y="50" width="1" height="4" fill="#f8f400"/><rect x="489" y="50" width="1" height="4" fill="#f8f400"/><rect x="490" y="50" width="1" height="4" fill="#f8f400"/><rect x="491" y="50" width="1" height="7" fill="#f8f400"/><rect x="492" y="50" width="1" height="4" fill="#f8f400"/><rect x="493" y="50" width="1" height="4" fill="#f8f400"/><rect x="494" y="50" width="1" height="4" fill="#f8f400"/><rect x="495" y="50" width="1" height="4" fill="#f8f400"/><rect x="496" y="50" width="1" height="5" fill="#f8f400"/><rect x="497" y="50" width="1" height="4" fill="#f8f400"/><rect x="498" y="50" width="1" height="4" fill="#f8f400"/><rect x="499" y="49" width="1" height="5" fill="#f8f400"/><rect x="500" y="49" width="1" height="6" fill="#f8f400"/><rect x="501" y="49" width="1" height="5" fill="#f8f400"/><rect x="502" y="48" width="1" height="5" fill="#f8f400"/><rect x="503" y="49" width="1" height="4" fill="#f8f400"/><rect x="504" y="49" width="1" height="4" fill="#f8f400"/><rect x="505" y="49" width="1" height="4" fill="#f8f400"/><rect x="506" y="49" width="1" height="4" fill="#f8f400"/><rect x="507" y="49" width="1" height="4" fill="#f8f400"/><rect x="508" y="49" width="1" height="7" fill="#f8f400"/><rect x="509" y="49" width="1" height="4" fill="#f8f400"/><rect x="510" y="48" width="1" height="5" fill="#f8f400"/><rect x="511" y="49" width="1" height="4" fill="#f8f400"/><rect x="512" y="49" width="1" height="4" fill="#f8f400"/><rect x="513" y="49" width="1" height="6" fill="#f8f400"/><rect x="514" y="49" width="1" height="4" fill="#f8f400"/><rect x="515" y="49" width="1" height="4" fill="#f8f400"/><rect x="516" y="49" width="1" height="4" fill="#f8f400"/><rect x="517" y="49" width="1" height="4" fill="#f8f400"/><rect x="518" y="49" width="1" height="4" fill="#f8f400"/><rect x="519" y="48" width="1" height="5" fill="#f8f400"/><rect x="520" y="47" width="1" height="6" fill="#f8f400"/><rect x="521" y="49" width="1" height="6" fill="#f8f400"/><rect x="522" y="49" width="1" height="4" fill="#f8f400"/><rect x="523" y="49" width="1" height="4" fill="#f8f400"/><rect x="524" y="49" width="1" height="4" fill="#f8f400"/><rect x="525" y="48" width="1" height="5" fill="#f8f400"/><rect x="526" y="49" width="1" height="4" fill="#f8f400"/><rect x="527" y="49" width="1" height="4" fill="#f8f400"/><rect x="528" y="49" width="1" height="5" fill="#f8f400"/><rect x="529" y="49" width="1" height="4" fill="#f8f400"/><rect x="530" y="48" width="1" height="5" fill="#f8f400"/><rect x="531" y="49" width="1" height="4" fill="#f8f400"/><rect x="532" y="49" width="1" height="4" fill="#f8f400"/><rect x="533" y="49" width="1" height="4" fill="#f8f400"/><rect x="534" y="49" width="1" height="4" fill="#f8f400"/><rect x="535" y="49" width="1" height="4" fill="#f8f400"/><rect x="536" y="49" width="1" height="4" fill="#f8f400"/><rect x="537" y="48" width="1" height="5" fill="#f8f400"/><rect x="538" y="47" width="1" height="6" fill="#f8f400"/><rect x="539" y="48" width="1" height="4" fill="#f8f400"/><rect x="540" y="48" width="1" height="4" fill="#f8f400"/><rect x="541" y="47" width="1" height="5" fill="#f8f400"/><rect x="542" y="47" width="1" height="5" fill="#f8f400"/><rect x="543" y="48" width="1" height="4" fill="#f8f400"/><rect x="544" y="48" width="1" height="4" fill="#f8f400"/><rect x="545" y="48" width="1" height="4" fill="#f8f400"/><rect x="546" y="48" width="1" height="4" fill="#f8f400"/><rect x="547" y="47" width="1" height="5" fill="#f8f400"/><rect x="548" y="48" width="1" height="8" fill="#f8f400"/><rect x="549" y="48" width="1" height="4" fill="#f8f400"/><rect x="550" y="47" width="1" height="5" fill="#f8f400"/><rect x="551" y="48" width="1" height="4" fill="#f8f400"/><rect x="552" y="48" width="1" height="4" fill="#f8f400"/><rect x="553" y="48" width="1" height="4" fill="#f8f400"/><rect x="554" y="48" width="1" height="4" fill="#f8f400"/><rect x="555" y="48" width="1" height="7" fill="#f8f400"/><rect x="556" y="48" width="1" height="4" fill="#f8f400"/><rect x="557" y="46" width="1" height="6" fill="#f8f400"/><rect x="558" y="48" width="1" height="4" fill="#f8f400"/><rect x="559" y="48" width="1" height="4" fill="#f8f400"/><rect x="560" y="48" width="1" height="4" fill="#f8f400"/><rect x="561" y="48" width="1" height="5" fill="#f8f400"/><rect x="562" y="47" width="1" height="5" fill="#f8f400"/><rect x="563" y="48" width="1" height="4" fill="#f8f400"/><rect x="564" y="48" width="1" height="7" fill="#f8f400"/><rect x="565" y="48" width="1" height="4" fill="#f8f400"/><rect x="566" y="48" width="1" height="5" fill="#f8f400"/><rect x="567" y="48" width="1" height="4" fill="#f8f400"/><rect x="568" y="46" width="1" height="6" fill="#f8f400"/><rect x="569" y="48" width="1" height="4" fill="#f8f400"/><rect x="570" y="48" width="1" height="4" fill="#f8f400"/><rect x="571" y="48" width="1" height="4" fill="#f8f400"/><rect x="572" y="48" width="1" height="4" fill="#f8f400"/><rect x="573" y="48" width="1" height="4" fill="#f8f400"/><rect x="574" y="48" width="1" height="5" fill="#f8f400"/><rect x="673" y="49" width="1" height="5" fill="#f8f400"/><rect x="674" y="50" width="1" height="4" fill="#f8f400"/><rect x="675" y="50" width="1" height="4" fill="#f8f400"/><rect x="676" y="50" width="1" height="4" fill="#f8f400"/><rect x="677" y="47" width="1" height="7" fill="#f8f400"/><rect x="678" y="50" width="1" height="4" fill="#f8f400"/><rect x="679" y="50" width="1" height="4" fill="#f8f400"/><rect x="680" y="50" width="1" height="4" fill="#f8f400"/><rect x="681" y="50" width="1" height="4" fill="#f8f400"/><rect x="682" y="50" width="1" height="5" fill="#f8f400"/><rect x="683" y="50" width="1" height="4" fill="#f8f400"/><rect x="684" y="50" width="1" height="4" fill="#f8f400"/><rect x="685" y="50" width="1" height="5" fill="#f8f400"/><rect x="686" y="50" width="1" height="6" fill="#f8f400"/><rect x="687" y="50" width="1" height="4" fill="#f8f400"/><rect x="688" y="50" width="1" height="4" fill="#f8f400"/><rect x="689" y="50" width="1" height="4" fill="#f8f400"/><rect x="690" y="50" width="1" height="4" fill="#f8f400"/><rect x="691" y="50" width="1" height="4" fill="#f8f400"/><rect x="692" y="48" width="1" height="6" fill="#f8f400"/><rect x="693" y="48" width="1" height="6" fill="#f8f400"/><rect x="694" y="50" width="1" height="4" fill="#f8f400"/><rect x="695" y="50" width="1" height="4" fill="#f8f400"/><rect x="696" y="50" width="1" height="4" fill="#f8f400"/><rect x="697" y="50" width="1" height="6" fill="#f8f400"/><rect x="698" y="46" width="1" height="7" fill="#f8f400"/><rect x="699" y="48" width="1" height="5" fill="#f8f400"/><rect x="700" y="49" width="1" height="6" fill="#f8f400"/><rect x="701" y="49" width="1" height="4" fill="#f8f400"/><rect x="702" y="49" width="1" height="4" fill="#f8f400"/><rect x="703" y="49" width="1" height="4" fill="#f8f400"/><rect x="704" y="49" width="1" height="4" fill="#f8f400"/><rect x="705" y="49" width="1" height="4" fill="#f8f400"/><rect x="706" y="48" width="1" height="5" fill="#f8f400"/><rect x="707" y="49" width="1" height="4" fill="#f8f400"/><rect x="708" y="47" width="1" height="6" fill="#f8f400"/><rect x="709" y="49" width="1" height="4" fill="#f8f400"/><rect x="710" y="49" width="1" height="4" fill="#f8f400"/><rect x="711" y="49" width="1" height="4" fill="#f8f400"/><rect x="712" y="49" width="1" height="4" fill="#f8f400"/><rect x="713" y="49" width="1" height="4" fill="#f8f400"/><rect x="714" y="49" width="1" height="5" fill="#f8f400"/><rect x="715" y="48" width="1" height="5" fill="#f8f400"/><rect x="716" y="49" width="1" height="4" fill="#f8f400"/><rect x="717" y="49" width="1" height="4" fill="#f8f400"/><rect x="718" y="48" width="1" height="5" fill="#f8f400"/><rect x="719" y="49" width="1" height="4" fill="#f8f400"/><rect x="720" y="49" width="1" height="4" fill="#f8f400"/><rect x="721" y="49" width="1" height="4" fill="#f8f400"/><rect x="722" y="48" width="1" height="5" fill="#f8f400"/><rect x="723" y="47" width="1" height="6" fill="#f8f400"/><rect x="724" y="49" width="1" height="4" fill="#f8f400"/><rect x="725" y="49" width="1" height="4" fill="#f8f400"/><rect x="726" y="49" width="1" height="4" fill="#f8f400"/><rect x="727" y="49" width="1" height="4" fill="#f8f400"/><rect x="728" y="48" width="1" height="5" fill="#f8f400"/><rect x="729" y="49" width="1" height="4" fill="#f8f400"/><rect x="730" y="49" width="1" height="4" fill="#f8f400"/><rect x="731" y="49" width="1" height="6" fill="#f8f400"/><rect x="732" y="49" width="1" height="4" fill="#f8f400"/><rect x="733" y="49" width="1" height="6" fill="#f8f400"/><rect x="734" y="48" width="1" height="5" fill="#f8f400"/><rect x="735" y="49" width="1" height="4" fill="#f8f400"/><rect x="736" y="49" width="1" height="4" fill="#f8f400"/><rect x="737" y="49" width="1" height="5" fill="#f8f400"/><rect x="738" y="49" width="1" height="4" fill="#f8f400"/><rect x="739" y="49" width="1" height="4" fill="#f8f400"/><rect x="740" y="48" width="1" height="4" fill="#f8f400"/><rect x="741" y="48" width="1" height="4" fill="#f8f400"/><rect x="742" y="48" width="1" height="4" fill="#f8f400"/><rect x="743" y="48" width="1" height="5" fill="#f8f400"/><rect x="744" y="48" width="1" height="4" fill="#f8f400"/><rect x="745" y="48" width="1" height="4" fill="#f8f400"/><rect x="746" y="48" width="1" height="4" fill="#f8f400"/><rect x="747" y="48" width="1" height="5" fill="#f8f400"/><rect x="748" y="48" width="1" height="4" fill="#f8f400"/><rect x="749" y="48" width="1" height="8" fill="#f8f400"/><rect x="750" y="48" width="1" height="4" fill="#f8f400"/><rect x="751" y="48" width="1" height="4" fill="#f8f400"/><rect x="752" y="48" width="1" height="4" fill="#f8f400"/><rect x="753" y="48" width="1" height="4" fill="#f8f400"/><rect x="754" y="48" width="1" height="4" fill="#f8f400"/><rect x="755" y="48" width="1" height="4" fill="#f8f400"/><rect x="756" y="48" width="1" height="8" fill="#f8f400"/><rect x="757" y="48" width="1" height="4" fill="#f8f400"/><rect x="758" y="48" width="1" height="4" fill="#f8f400"/><rect x="759" y="46" width="1" height="6" fill="#f8f400"/><rect x="760" y="48" width="1" height="4" fill="#f8f400"/><rect x="761" y="48" width="1" height="7" fill="#f8f400"/><rect x="762" y="47" width="1" height="5" fill="#f8f400"/><rect x="763" y="47" width="1" height="5" fill="#f8f400"/><rect x="764" y="48" width="1" height="4" fill="#f8f400"/><rect x="765" y="48" width="1" height="4" fill="#f8f400"/><rect x="766" y="48" width="1" height="4" fill="#f8f400"/><rect x="767" y="48" width="1" height="8" fill="#f8f400"/><rect x="768" y="48" width="1" height="4" fill="#f8f400"/><rect x="769" y="47" width="1" height="5" fill="#f8f400"/><rect x="770" y="48" width="1" height="4" fill="#f8f400"/><rect x="771" y="48" width="1" height="4" fill="#f8f400"/><rect x="772" y="46" width="1" height="6" fill="#f8f400"/><rect x="773" y="47" width="1" height="5" fill="#f8f400"/><rect x="774" y="48" width="1" height="4" fill="#f8f400"/><rect x="775" y="48" width="1" height="6" fill="#f8f400"/><rect x="776" y="48" width="1" height="4" fill="#f8f400"/><rect x="16" y="178" width="1" height="5" fill="#f8f400"/><rect x="17" y="178" width="1" height="5" fill="#f8f400"/><rect x="18" y="177" width="1" height="6" fill="#f8f400"/><rect x="19" y="178" width="1" height="5" fill="#f8f400"/><rect x="20" y="178" width="1" height="9" fill="#f8f400"/><rect x="21" y="178" width="1" height="5" fill="#f8f400"/><rect x="22" y="177" width="1" height="6" fill="#f8f400"/><rect x="23" y="178" width="1" height="5" fill="#f8f400"/><rect x="24" y="178" width="1" height="6" fill="#f8f400"/><rect x="25" y="177" width="1" height="6" fill="#f8f400"/><rect x="26" y="177" width="1" height="6" fill="#f8f400"/><rect x="27" y="178" width="1" height="5" fill="#f8f400"/><rect x="28" y="178" width="1" height="5" fill="#f8f400"/><rect x="29" y="178" width="1" height="5" fill="#f8f400"/><rect x="30" y="178" width="1" height="5" fill="#f8f400"/><rect x="31" y="178" width="1" height="5" fill="#f8f400"/><rect x="32" y="178" width="1" height="5" fill="#f8f400"/><rect x="33" y="177" width="1" height="6" fill="#f8f400"/><rect x="34" y="178" width="1" height="5" fill="#f8f400"/><rect x="35" y="178" width="1" height="5" fill="#f8f400"/><rect x="206" y="177" width="1" height="6" fill="#f8f400"/><rect x="207" y="178" width="1" height="5" fill="#f8f400"/><rect x="208" y="178" width="1" height="5" fill="#f8f400"/><rect x="209" y="178" width="1" height="5" fill="#f8f400"/><rect x="210" y="178" width="1" height="5" fill="#f8f400"/><rect x="211" y="178" width="1" height="9" fill="#f8f400"/><rect x="212" y="178" width="1" height="5" fill="#f8f400"/><rect x="213" y="178" width="1" height="5" fill="#f8f400"/><rect x="214" y="178" width="1" height="5" fill="#f8f400"/><rect x="215" y="178" width="1" height="5" fill="#f8f400"/><rect x="216" y="178" width="1" height="6" fill="#f8f400"/><rect x="217" y="175" width="1" height="8" fill="#f8f400"/><rect x="218" y="178" width="1" height="5" fill="#f8f400"/><rect x="219" y="177" width="1" height="6" fill="#f8f400"/><rect x="220" y="177" width="1" height="6" fill="#f8f400"/><rect x="221" y="178" width="1" height="5" fill="#f8f400"/><rect x="222" y="178" width="1" height="5" fill="#f8f400"/><rect x="223" y="178" width="1" height="5" fill="#f8f400"/><rect x="224" y="177" width="1" height="6" fill="#f8f400"/><rect x="225" y="177" width="1" height="6" fill="#f8f400"/><rect x="226" y="178" width="1" height="5" fill="#f8f400"/><rect x="227" y="178" width="1" height="5" fill="#f8f400"/><rect x="228" y="178" width="1" height="5" fill="#f8f400"/><rect x="229" y="178" width="1" height="5" fill="#f8f400"/><rect x="230" y="178" width="1" height="5" fill="#f8f400"/><rect x="231" y="176" width="1" height="7" fill="#f8f400"/><rect x="232" y="178" width="1" height="5" fill="#f8f400"/><rect x="233" y="178" width="1" height="5" fill="#f8f400"/><rect x="234" y="178" width="1" height="9" fill="#f8f400"/><rect x="235" y="178" width="1" height="5" fill="#f8f400"/><rect x="236" y="176" width="1" height="7" fill="#f8f400"/><rect x="237" y="178" width="1" height="5" fill="#f8f400"/><rect x="238" y="178" width="1" height="5" fill="#f8f400"/><rect x="239" y="178" width="1" height="5" fill="#f8f400"/><rect x="409" y="178" width="1" height="5" fill="#f8f400"/><rect x="410" y="178" width="1" height="5" fill="#f8f400"/><rect x="411" y="177" width="1" height="6" fill="#f8f400"/><rect x="412" y="178" width="1" height="5" fill="#f8f400"/><rect x="413" y="178" width="1" height="5" fill="#f8f400"/><rect x="414" y="177" width="1" height="6" fill="#f8f400"/><rect x="415" y="178" width="1" height="7" fill="#f8f400"/><rect x="416" y="175" width="1" height="8" fill="#f8f400"/><rect x="417" y="178" width="1" height="5" fill="#f8f400"/><rect x="418" y="178" width="1" height="5" fill="#f8f400"/><rect x="419" y="178" width="1" height="5" fill="#f8f400"/><rect x="420" y="178" width="1" height="5" fill="#f8f400"/><rect x="421" y="178" width="1" height="7" fill="#f8f400"/><rect x="422" y="178" width="1" height="5" fill="#f8f400"/><rect x="423" y="178" width="1" height="5" fill="#f8f400"/><rect x="424" y="176" width="1" height="7" fill="#f8f400"/><rect x="425" y="178" width="1" height="5" fill="#f8f400"/><rect x="426" y="178" width="1" height="5" fill="#f8f400"/><rect x="427" y="178" width="1" height="6" fill="#f8f400"/><rect x="428" y="178" width="1" height="5" fill="#f8f400"/><rect x="429" y="175" width="1" height="8" fill="#f8f400"/><rect x="430" y="178" width="1" height="5" fill="#f8f400"/><rect x="431" y="178" width="1" height="5" fill="#f8f400"/><rect x="432" y="177" width="1" height="6" fill="#f8f400"/><rect x="433" y="177" width="1" height="6" fill="#f8f400"/><rect x="434" y="178" width="1" height="5" fill="#f8f400"/><rect x="435" y="178" width="1" height="7" fill="#f8f400"/><rect x="436" y="176" width="1" height="7" fill="#f8f400"/><rect x="437" y="178" width="1" height="5" fill="#f8f400"/><rect x="438" y="178" width="1" height="5" fill="#f8f400"/><rect x="439" y="178" width="1" height="5" fill="#f8f400"/><rect x="440" y="178" width="1" height="5" fill="#f8f400"/><rect x="441" y="178" width="1" height="5" fill="#f8f400"/><rect x="442" y="178" width="1" height="5" fill="#f8f400"/><rect x="612" y="175" width="1" height="8" fill="#f8f400"/><rect x="613" y="178" width="1" height="5" fill="#f8f400"/><rect x="614" y="177" width="1" height="6" fill="#f8f400"/><rect x="615" y="178" width="1" height="5" fill="#f8f400"/><rect x="616" y="178" width="1" height="5" fill="#f8f400"/><rect x="617" y="178" width="1" height="5" fill="#f8f400"/><rect x="618" y="176" width="1" height="7" fill="#f8f400"/><rect x="619" y="177" width="1" height="6" fill="#f8f400"/><rect x="620" y="178" width="1" height="5" fill="#f8f400"/><rect x="621" y="178" width="1" height="7" fill="#f8f400"/><rect x="622" y="178" width="1" height="5" fill="#f8f400"/><rect x="623" y="178" width="1" height="8" fill="#f8f400"/><rect x="624" y="178" width="1" height="5" fill="#f8f400"/><rect x="625" y="178" width="1" height="7" fill="#f8f400"/><rect x="626" y="178" width="1" height="5" fill="#f8f400"/><rect x="627" y="178" width="1" height="9" fill="#f8f400"/><rect x="628" y="176" width="1" height="7" fill="#f8f400"/><rect x="629" y="178" width="1" height="5" fill="#f8f400"/><rect x="630" y="178" width="1" height="6" fill="#f8f400"/><rect x="631" y="178" width="1" height="5" fill="#f8f400"/><rect x="632" y="178" width="1" height="5" fill="#f8f400"/><rect x="633" y="178" width="1" height="8" fill="#f8f400"/><rect x="634" y="178" width="1" height="5" fill="#f8f400"/><rect x="36" y="48" width="1" height="136" fill="#f8f400"/><rect x="37" y="46" width="1" height="139" fill="#f8f400"/><rect x="38" y="47" width="1" height="141" fill="#f8f400"/><rect x="39" y="46" width="1" height="142" fill="#f8f400"/><rect x="40" y="44" width="1" height="141" fill="#f8f400"/><rect x="41" y="46" width="1" height="138" fill="#f8f400"/><rect x="42" y="45" width="1" height="139" fill="#f8f400"/><rect x="43" y="46" width="1" height="139" fill="#f8f400"/><rect x="44" y="46" width="1" height="139" fill="#f8f400"/><rect x="45" y="46" width="1" height="138" fill="#f8f400"/><rect x="46" y="46" width="1" height="140" fill="#f8f400"/><rect x="47" y="48" width="1" height="136" fill="#f8f400"/><rect x="48" y="48" width="1" height="136" fill="#f8f400"/><rect x="49" y="48" width="1" height="136" fill="#f8f400"/><rect x="50" y="45" width="1" height="139" fill="#f8f400"/><rect x="51" y="46" width="1" height="139" fill="#f8f400"/><rect x="52" y="46" width="1" height="138" fill="#f8f400"/><rect x="53" y="48" width="1" height="137" fill="#f8f400"/><rect x="54" y="46" width="1" height="139" fill="#f8f400"/><rect x="55" y="44" width="1" height="140" fill="#f8f400"/><rect x="56" y="45" width="1" height="139" fill="#f8f400"/><rect x="57" y="46" width="1" height="139" fill="#f8f400"/><rect x="58" y="46" width="1" height="139" fill="#f8f400"/><rect x="59" y="46" width="1" height="138" fill="#f8f400"/><rect x="60" y="46" width="1" height="139" fill="#f8f400"/><rect x="61" y="46" width="1" height="142" fill="#f8f400"/><rect x="62" y="46" width="1" height="139" fill="#f8f400"/><rect x="63" y="46" width="1" height="138" fill="#f8f400"/><rect x="64" y="46" width="1" height="138" fill="#f8f400"/><rect x="175" y="47" width="1" height="137" fill="#f8f400"/><rect x="176" y="46" width="1" height="138" fill="#f8f400"/><rect x="177" y="46" width="1" height="139" fill="#f8f400"/><rect x="178" y="46" width="1" height="138" fill="#f8f400"/><rect x="179" y="45" width="1" height="142" fill="#f8f400"/><rect x="180" y="46" width="1" height="139" fill="#f8f400"/><rect x="181" y="46" width="1" height="140" fill="#f8f400"/><rect x="182" y="46" width="1" height="139" fill="#f8f400"/><rect x="183" y="46" width="1" height="138" fill="#f8f400"/><rect x="184" y="47" width="1" height="139" fill="#f8f400"/><rect x="185" y="46" width="1" height="140" fill="#f8f400"/><rect x="186" y="45" width="1" height="140" fill="#f8f400"/><rect x="187" y="47" width="1" height="137" fill="#f8f400"/><rect x="188" y="46" width="1" height="138" fill="#f8f400"/><rect x="189" y="47" width="1" height="137" fill="#f8f400"/><rect x="190" y="45" width="1" height="139" fill="#f8f400"/><rect x="191" y="46" width="1" height="141" fill="#f8f400"/><rect x="192" y="46" width="1" height="138" fill="#f8f400"/><rect x="193" y="46" width="1" height="138" fill="#f8f400"/><rect x="194" y="45" width="1" height="139" fill="#f8f400"/><rect x="195" y="46" width="1" height="142" fill="#f8f400"/><rect x="196" y="46" width="1" height="140" fill="#f8f400"/><rect x="197" y="46" width="1" height="138" fill="#f8f400"/><rect x="198" y="47" width="1" height="137" fill="#f8f400"/><rect x="199" y="48" width="1" height="137" fill="#f8f400"/><rect x="200" y="46" width="1" height="139" fill="#f8f400"/><rect x="201" y="46" width="1" height="140" fill="#f8f400"/><rect x="202" y="46" width="1" height="138" fill="#f8f400"/><rect x="203" y="46" width="1" height="138" fill="#f8f400"/><rect x="204" y="47" width="1" height="138" fill="#f8f400"/><rect x="205" y="45" width="1" height="140" fill="#f8f400"/><rect x="211" y="46" width="1" height="138" fill="#f8f400"/><rect x="212" y="46" width="1" height="138" fill="#f8f400"/><rect x="213" y="44" width="1" height="141" fill="#f8f400"/><rect x="240" y="46" width="1" height="139" fill="#f8f400"/><rect x="241" y="45" width="1" height="142" fill="#f8f400"/><rect x="242" y="45" width="1" height="142" fill="#f8f400"/><rect x="243" y="47" width="1" height="137" fill="#f8f400"/><rect x="244" y="46" width="1" height="139" fill="#f8f400"/><rect x="245" y="46" width="1" height="138" fill="#f8f400"/><rect x="246" y="44" width="1" height="140" fill="#f8f400"/><rect x="247" y="47" width="1" height="138" fill="#f8f400"/><rect x="248" y="45" width="1" height="139" fill="#f8f400"/><rect x="249" y="46" width="1" height="138" fill="#f8f400"/><rect x="250" y="48" width="1" height="138" fill="#f8f400"/><rect x="251" y="45" width="1" height="139" fill="#f8f400"/><rect x="252" y="46" width="1" height="141" fill="#f8f400"/><rect x="253" y="46" width="1" height="138" fill="#f8f400"/><rect x="254" y="46" width="1" height="138" fill="#f8f400"/><rect x="255" y="47" width="1" height="137" fill="#f8f400"/><rect x="256" y="45" width="1" height="139" fill="#f8f400"/><rect x="257" y="48" width="1" height="137" fill="#f8f400"/><rect x="258" y="45" width="1" height="139" fill="#f8f400"/><rect x="259" y="45" width="1" height="139" fill="#f8f400"/><rect x="260" y="46" width="1" height="139" fill="#f8f400"/><rect x="261" y="47" width="1" height="137" fill="#f8f400"/><rect x="262" y="46" width="1" height="138" fill="#f8f400"/><rect x="263" y="46" width="1" height="139" fill="#f8f400"/><rect x="264" y="47" width="1" height="139" fill="#f8f400"/><rect x="265" y="45" width="1" height="139" fill="#f8f400"/><rect x="266" y="46" width="1" height="138" fill="#f8f400"/><rect x="267" y="45" width="1" height="139" fill="#f8f400"/><rect x="268" y="46" width="1" height="138" fill="#f8f400"/><rect x="377" y="46" width="1" height="138" fill="#f8f400"/><rect x="378" y="47" width="1" height="138" fill="#f8f400"/><rect x="379" y="47" width="1" height="138" fill="#f8f400"/><rect x="380" y="47" width="1" height="137" fill="#f8f400"/><rect x="381" y="46" width="1" height="138" fill="#f8f400"/><rect x="382" y="46" width="1" height="140" fill="#f8f400"/><rect x="383" y="46" width="1" height="138" fill="#f8f400"/><rect x="384" y="46" width="1" height="138" fill="#f8f400"/><rect x="385" y="47" width="1" height="137" fill="#f8f400"/><rect x="386" y="46" width="1" height="139" fill="#f8f400"/><rect x="387" y="46" width="1" height="139" fill="#f8f400"/><rect x="388" y="47" width="1" height="138" fill="#f8f400"/><rect x="389" y="46" width="1" height="138" fill="#f8f400"/><rect x="390" y="46" width="1" height="141" fill="#f8f400"/><rect x="391" y="46" width="1" height="141" fill="#f8f400"/><rect x="392" y="47" width="1" height="137" fill="#f8f400"/><rect x="393" y="46" width="1" height="138" fill="#f8f400"/><rect x="394" y="46" width="1" height="138" fill="#f8f400"/><rect x="395" y="46" width="1" height="138" fill="#f8f400"/><rect x="396" y="46" width="1" height="138" fill="#f8f400"/><rect x="397" y="48" width="1" height="136" fill="#f8f400"/><rect x="398" y="46" width="1" height="140" fill="#f8f400"/><rect x="399" y="47" width="1" height="137" fill="#f8f400"/><rect x="400" y="45" width="1" height="139" fill="#f8f400"/><rect x="401" y="44" width="1" height="141" fill="#f8f400"/><rect x="402" y="45" width="1" height="139" fill="#f8f400"/><rect x="403" y="47" width="1" height="138" fill="#f8f400"/><rect x="404" y="45" width="1" height="140" fill="#f8f400"/><rect x="405" y="46" width="1" height="138" fill="#f8f400"/><rect x="406" y="46" width="1" height="138" fill="#f8f400"/><rect x="407" y="45" width="1" height="139" fill="#f8f400"/><rect x="408" y="47" width="1" height="137" fill="#f8f400"/><rect x="430" y="46" width="1" height="138" fill="#f8f400"/><rect x="431" y="45" width="1" height="139" fill="#f8f400"/><rect x="432" y="46" width="1" height="138" fill="#f8f400"/><rect x="433" y="45" width="1" height="140" fill="#f8f400"/><rect x="443" y="45" width="1" height="140" fill="#f8f400"/><rect x="444" y="46" width="1" height="138" fill="#f8f400"/><rect x="445" y="46" width="1" height="138" fill="#f8f400"/><rect x="446" y="46" width="1" height="140" fill="#f8f400"/><rect x="447" y="45" width="1" height="140" fill="#f8f400"/><rect x="448" y="46" width="1" height="139" fill="#f8f400"/><rect x="449" y="47" width="1" height="137" fill="#f8f400"/><rect x="450" y="45" width="1" height="141" fill="#f8f400"/><rect x="451" y="47" width="1" height="137" fill="#f8f400"/><rect x="452" y="47" width="1" height="140" fill="#f8f400"/><rect x="453" y="46" width="1" height="138" fill="#f8f400"/><rect x="454" y="46" width="1" height="138" fill="#f8f400"/><rect x="455" y="45" width="1" height="139" fill="#f8f400"/><rect x="456" y="48" width="1" height="136" fill="#f8f400"/><rect x="457" y="47" width="1" height="137" fill="#f8f400"/><rect x="458" y="46" width="1" height="139" fill="#f8f400"/><rect x="459" y="46" width="1" height="139" fill="#f8f400"/><rect x="460" y="46" width="1" height="139" fill="#f8f400"/><rect x="461" y="45" width="1" height="140" fill="#f8f400"/><rect x="462" y="46" width="1" height="138" fill="#f8f400"/><rect x="463" y="45" width="1" height="139" fill="#f8f400"/><rect x="464" y="46" width="1" height="138" fill="#f8f400"/><rect x="465" y="47" width="1" height="137" fill="#f8f400"/><rect x="466" y="47" width="1" height="137" fill="#f8f400"/><rect x="467" y="47" width="1" height="137" fill="#f8f400"/><rect x="468" y="47" width="1" height="138" fill="#f8f400"/><rect x="469" y="46" width="1" height="138" fill="#f8f400"/><rect x="470" y="45" width="1" height="139" fill="#f8f400"/><rect x="471" y="45" width="1" height="139" fill="#f8f400"/><rect x="472" y="46" width="1" height="138" fill="#f8f400"/><rect x="473" y="46" width="1" height="141" fill="#f8f400"/><rect x="575" y="48" width="1" height="140" fill="#f8f400"/><rect x="576" y="46" width="1" height="139" fill="#f8f400"/><rect x="579" y="46" width="1" height="139" fill="#f8f400"/><rect x="580" y="47" width="1" height="139" fill="#f8f400"/><rect x="581" y="46" width="1" height="138" fill="#f8f400"/><rect x="582" y="47" width="1" height="137" fill="#f8f400"/><rect x="583" y="47" width="1" height="137" fill="#f8f400"/><rect x="584" y="46" width="1" height="138" fill="#f8f400"/><rect x="585" y="46" width="1" height="138" fill="#f8f400"/><rect x="586" y="47" width="1" height="140" fill="#f8f400"/><rect x="587" y="44" width="1" height="140" fill="#f8f400"/><rect x="588" y="46" width="1" height="138" fill="#f8f400"/><rect x="589" y="47" width="1" height="137" fill="#f8f400"/><rect x="590" y="46" width="1" height="138" fill="#f8f400"/><rect x="591" y="44" width="1" height="140" fill="#f8f400"/><rect x="592" y="46" width="1" height="139" fill="#f8f400"/><rect x="593" y="47" width="1" height="139" fill="#f8f400"/><rect x="594" y="46" width="1" height="138" fill="#f8f400"/><rect x="595" y="44" width="1" height="141" fill="#f8f400"/><rect x="596" y="47" width="1" height="140" fill="#f8f400"/><rect x="597" y="46" width="1" height="139" fill="#f8f400"/><rect x="598" y="47" width="1" height="138" fill="#f8f400"/><rect x="599" y="46" width="1" height="138" fill="#f8f400"/><rect x="600" y="45" width="1" height="139" fill="#f8f400"/><rect x="601" y="45" width="1" height="143" fill="#f8f400"/><rect x="602" y="46" width="1" height="138" fill="#f8f400"/><rect x="603" y="46" width="1" height="138" fill="#f8f400"/><rect x="604" y="47" width="1" height="137" fill="#f8f400"/><rect x="606" y="45" width="1" height="140" fill="#f8f400"/><rect x="607" y="47" width="1" height="138" fill="#f8f400"/><rect x="608" y="47" width="1" height="137" fill="#f8f400"/><rect x="609" y="46" width="1" height="138" fill="#f8f400"/><rect x="610" y="46" width="1" height="138" fill="#f8f400"/><rect x="611" y="44" width="1" height="140" fill="#f8f400"/><rect x="635" y="48" width="1" height="136" fill="#f8f400"/><rect x="636" y="46" width="1" height="138" fill="#f8f400"/><rect x="637" y="46" width="1" height="138" fill="#f8f400"/><rect x="638" y="48" width="1" height="137" fill="#f8f400"/><rect x="639" y="46" width="1" height="138" fill="#f8f400"/><rect x="640" y="46" width="1" height="138" fill="#f8f400"/><rect x="641" y="46" width="1" height="138" fill="#f8f400"/><rect x="642" y="46" width="1" height="138" fill="#f8f400"/><rect x="643" y="47" width="1" height="137" fill="#f8f400"/><rect x="644" y="45" width="1" height="139" fill="#f8f400"/><rect x="645" y="46" width="1" height="138" fill="#f8f400"/><rect x="646" y="46" width="1" height="140" fill="#f8f400"/><rect x="647" y="48" width="1" height="136" fill="#f8f400"/><rect x="648" y="46" width="1" height="138" fill="#f8f400"/><rect x="649" y="46" width="1" height="138" fill="#f8f400"/><rect x="650" y="47" width="1" height="137" fill="#f8f400"/><rect x="651" y="46" width="1" height="142" fill="#f8f400"/><rect x="652" y="46" width="1" height="138" fill="#f8f400"/><rect x="653" y="45" width="1" height="139" fill="#f8f400"/><rect x="654" y="47" width="1" height="137" fill="#f8f400"/><rect x="655" y="46" width="1" height="138" fill="#f8f400"/><rect x="656" y="45" width="1" height="139" fill="#f8f400"/><rect x="657" y="46" width="1" height="138" fill="#f8f400"/><rect x="658" y="46" width="1" height="138" fill="#f8f400"/><rect x="659" y="46" width="1" height="138" fill="#f8f400"/><rect x="660" y="48" width="1" height="136" fill="#f8f400"/><rect x="661" y="47" width="1" height="137" fill="#f8f400"/><rect x="662" y="47" width="1" height="137" fill="#f8f400"/><rect x="663" y="44" width="1" height="140" fill="#f8f400"/><rect x="664" y="47" width="1" height="138" fill="#f8f400"/><rect x="665" y="47" width="1" height="141" fill="#f8f400"/><rect x="666" y="45" width="1" height="139" fill="#f8f400"/><rect x="667" y="48" width="1" height="136" fill="#f8f400"/><rect x="668" y="47" width="1" height="139" fill="#f8f400"/><rect x="669" y="47" width="1" height="137" fill="#f8f400"/><rect x="670" y="46" width="1" height="138" fill="#f8f400"/><rect x="671" y="47" width="1" height="137" fill="#f8f400"/><rect x="672" y="47" width="1" height="138" fill="#f8f400"/><rect x="777" y="44" width="1" height="140" fill="#f8f400"/><rect x="778" y="46" width="1" height="138" fill="#f8f400"/><rect x="779" y="46" width="1" height="138" fill="#f8f400"/><rect x="780" y="47" width="1" height="137" fill="#f8f400"/><rect x="51" y="32" width="1" height="16" fill="#d0cc88"/><rect x="443" y="40" width="1" height="8" fill="#f8f400"/><rect x="621" y="40" width="1" height="8" fill="#d8d470"/></g><g shape-rendering="crispEdges"><rect x="225" y="366" width="1" height="16" fill="#70d870" opacity="1"/><rect x="415" y="366" width="2" height="16" fill="#70d870" opacity="0.95"/><rect x="621" y="366" width="1" height="16" fill="#70d870" opacity="1"/><rect x="782" y="366" width="1" height="16" fill="#70d870" opacity="0.9"/><rect x="65" y="366" width="1" height="4" fill="#10f010"/><rect x="66" y="367" width="1" height="3" fill="#10f010"/><rect x="67" y="367" width="1" height="3" fill="#10f010"/><rect x="68" y="366" width="1" height="4" fill="#10f010"/><rect x="69" y="367" width="1" height="3" fill="#10f010"/><rect x="70" y="367" width="1" height="3" fill="#10f010"/><rect x="71" y="367" width="1" height="3" fill="#10f010"/><rect x="72" y="366" width="1" height="4" fill="#10f010"/><rect x="73" y="366" width="1" height="4" fill="#10f010"/><rect x="74" y="367" width="1" height="3" fill="#10f010"/><rect x="75" y="366" width="1" height="4" fill="#10f010"/><rect x="76" y="367" width="1" height="3" fill="#10f010"/><rect x="77" y="366" width="1" height="4" fill="#10f010"/><rect x="78" y="366" width="1" height="4" fill="#10f010"/><rect x="79" y="367" width="1" height="3" fill="#10f010"/><rect x="80" y="367" width="1" height="3" fill="#10f010"/><rect x="81" y="366" width="1" height="4" fill="#10f010"/><rect x="82" y="367" width="1" height="3" fill="#10f010"/><rect x="83" y="366" width="1" height="4" fill="#10f010"/><rect x="84" y="367" width="1" height="3" fill="#10f010"/><rect x="85" y="367" width="1" height="3" fill="#10f010"/><rect x="86" y="367" width="1" height="3" fill="#10f010"/><rect x="87" y="366" width="1" height="4" fill="#10f010"/><rect x="88" y="366" width="1" height="4" fill="#10f010"/><rect x="89" y="367" width="1" height="3" fill="#10f010"/><rect x="90" y="366" width="1" height="4" fill="#10f010"/><rect x="91" y="366" width="1" height="4" fill="#10f010"/><rect x="92" y="366" width="1" height="4" fill="#10f010"/><rect x="93" y="366" width="1" height="4" fill="#10f010"/><rect x="94" y="367" width="1" height="3" fill="#10f010"/><rect x="95" y="366" width="1" height="4" fill="#10f010"/><rect x="96" y="367" width="1" height="3" fill="#10f010"/><rect x="97" y="366" width="1" height="4" fill="#10f010"/><rect x="98" y="367" width="1" height="3" fill="#10f010"/><rect x="99" y="367" width="1" height="3" fill="#10f010"/><rect x="100" y="367" width="1" height="3" fill="#10f010"/><rect x="101" y="367" width="1" height="3" fill="#10f010"/><rect x="102" y="367" width="1" height="3" fill="#10f010"/><rect x="103" y="367" width="1" height="3" fill="#10f010"/><rect x="104" y="367" width="1" height="3" fill="#10f010"/><rect x="105" y="366" width="1" height="4" fill="#10f010"/><rect x="106" y="366" width="1" height="4" fill="#10f010"/><rect x="107" y="366" width="1" height="4" fill="#10f010"/><rect x="108" y="367" width="1" height="5" fill="#10f010"/><rect x="109" y="367" width="1" height="3" fill="#10f010"/><rect x="110" y="367" width="1" height="3" fill="#10f010"/><rect x="111" y="367" width="1" height="3" fill="#10f010"/><rect x="112" y="366" width="1" height="4" fill="#10f010"/><rect x="113" y="367" width="1" height="3" fill="#10f010"/><rect x="114" y="367" width="1" height="3" fill="#10f010"/><rect x="115" y="367" width="1" height="3" fill="#10f010"/><rect x="116" y="367" width="1" height="3" fill="#10f010"/><rect x="117" y="366" width="1" height="4" fill="#10f010"/><rect x="118" y="367" width="1" height="3" fill="#10f010"/><rect x="119" y="366" width="1" height="4" fill="#10f010"/><rect x="120" y="367" width="1" height="3" fill="#10f010"/><rect x="121" y="367" width="1" height="3" fill="#10f010"/><rect x="122" y="367" width="1" height="3" fill="#10f010"/><rect x="123" y="367" width="1" height="3" fill="#10f010"/><rect x="124" y="366" width="1" height="4" fill="#10f010"/><rect x="125" y="367" width="1" height="3" fill="#10f010"/><rect x="126" y="366" width="1" height="4" fill="#10f010"/><rect x="127" y="367" width="1" height="3" fill="#10f010"/><rect x="128" y="367" width="1" height="3" fill="#10f010"/><rect x="129" y="367" width="1" height="3" fill="#10f010"/><rect x="130" y="367" width="1" height="3" fill="#10f010"/><rect x="131" y="367" width="1" height="3" fill="#10f010"/><rect x="132" y="366" width="1" height="4" fill="#10f010"/><rect x="133" y="367" width="1" height="3" fill="#10f010"/><rect x="134" y="367" width="1" height="3" fill="#10f010"/><rect x="135" y="367" width="1" height="3" fill="#10f010"/><rect x="136" y="367" width="1" height="3" fill="#10f010"/><rect x="137" y="366" width="1" height="4" fill="#10f010"/><rect x="138" y="366" width="1" height="4" fill="#10f010"/><rect x="139" y="366" width="1" height="4" fill="#10f010"/><rect x="140" y="367" width="1" height="3" fill="#10f010"/><rect x="141" y="367" width="1" height="4" fill="#10f010"/><rect x="142" y="367" width="1" height="3" fill="#10f010"/><rect x="143" y="367" width="1" height="4" fill="#10f010"/><rect x="144" y="366" width="1" height="4" fill="#10f010"/><rect x="145" y="366" width="1" height="4" fill="#10f010"/><rect x="146" y="366" width="1" height="4" fill="#10f010"/><rect x="147" y="367" width="1" height="3" fill="#10f010"/><rect x="148" y="367" width="1" height="3" fill="#10f010"/><rect x="149" y="367" width="1" height="3" fill="#10f010"/><rect x="150" y="367" width="1" height="3" fill="#10f010"/><rect x="151" y="367" width="1" height="3" fill="#10f010"/><rect x="152" y="367" width="1" height="3" fill="#10f010"/><rect x="153" y="367" width="1" height="3" fill="#10f010"/><rect x="154" y="367" width="1" height="3" fill="#10f010"/><rect x="155" y="366" width="1" height="4" fill="#10f010"/><rect x="156" y="366" width="1" height="4" fill="#10f010"/><rect x="157" y="367" width="1" height="3" fill="#10f010"/><rect x="158" y="367" width="1" height="3" fill="#10f010"/><rect x="159" y="367" width="1" height="3" fill="#10f010"/><rect x="160" y="367" width="1" height="3" fill="#10f010"/><rect x="161" y="366" width="1" height="4" fill="#10f010"/><rect x="162" y="367" width="1" height="3" fill="#10f010"/><rect x="163" y="367" width="1" height="3" fill="#10f010"/><rect x="164" y="367" width="1" height="5" fill="#10f010"/><rect x="165" y="367" width="1" height="4" fill="#10f010"/><rect x="166" y="366" width="1" height="4" fill="#10f010"/><rect x="167" y="367" width="1" height="3" fill="#10f010"/><rect x="168" y="367" width="1" height="3" fill="#10f010"/><rect x="169" y="366" width="1" height="4" fill="#10f010"/><rect x="170" y="367" width="1" height="3" fill="#10f010"/><rect x="171" y="367" width="1" height="3" fill="#10f010"/><rect x="172" y="367" width="1" height="3" fill="#10f010"/><rect x="173" y="366" width="1" height="4" fill="#10f010"/><rect x="174" y="367" width="1" height="3" fill="#10f010"/><rect x="269" y="366" width="1" height="4" fill="#10f010"/><rect x="270" y="366" width="1" height="4" fill="#10f010"/><rect x="271" y="366" width="1" height="4" fill="#10f010"/><rect x="272" y="367" width="1" height="3" fill="#10f010"/><rect x="273" y="367" width="1" height="3" fill="#10f010"/><rect x="274" y="367" width="1" height="3" fill="#10f010"/><rect x="275" y="366" width="1" height="4" fill="#10f010"/><rect x="276" y="367" width="1" height="3" fill="#10f010"/><rect x="277" y="367" width="1" height="3" fill="#10f010"/><rect x="278" y="366" width="1" height="4" fill="#10f010"/><rect x="279" y="367" width="1" height="3" fill="#10f010"/><rect x="280" y="367" width="1" height="3" fill="#10f010"/><rect x="281" y="366" width="1" height="4" fill="#10f010"/><rect x="282" y="367" width="1" height="3" fill="#10f010"/><rect x="283" y="367" width="1" height="3" fill="#10f010"/><rect x="284" y="366" width="1" height="4" fill="#10f010"/><rect x="285" y="367" width="1" height="3" fill="#10f010"/><rect x="286" y="366" width="1" height="4" fill="#10f010"/><rect x="287" y="366" width="1" height="4" fill="#10f010"/><rect x="288" y="367" width="1" height="3" fill="#10f010"/><rect x="289" y="366" width="1" height="4" fill="#10f010"/><rect x="290" y="366" width="1" height="4" fill="#10f010"/><rect x="291" y="367" width="1" height="3" fill="#10f010"/><rect x="292" y="367" width="1" height="3" fill="#10f010"/><rect x="293" y="366" width="1" height="4" fill="#10f010"/><rect x="294" y="366" width="1" height="4" fill="#10f010"/><rect x="295" y="367" width="1" height="3" fill="#10f010"/><rect x="296" y="367" width="1" height="3" fill="#10f010"/><rect x="297" y="367" width="1" height="3" fill="#10f010"/><rect x="298" y="367" width="1" height="3" fill="#10f010"/><rect x="299" y="367" width="1" height="3" fill="#10f010"/><rect x="300" y="367" width="1" height="3" fill="#10f010"/><rect x="301" y="367" width="1" height="3" fill="#10f010"/><rect x="302" y="366" width="1" height="4" fill="#10f010"/><rect x="303" y="366" width="1" height="4" fill="#10f010"/><rect x="304" y="367" width="1" height="3" fill="#10f010"/><rect x="305" y="367" width="1" height="3" fill="#10f010"/><rect x="306" y="367" width="1" height="3" fill="#10f010"/><rect x="307" y="367" width="1" height="3" fill="#10f010"/><rect x="308" y="366" width="1" height="4" fill="#10f010"/><rect x="309" y="367" width="1" height="3" fill="#10f010"/><rect x="310" y="366" width="1" height="4" fill="#10f010"/><rect x="311" y="367" width="1" height="3" fill="#10f010"/><rect x="312" y="367" width="1" height="3" fill="#10f010"/><rect x="313" y="366" width="1" height="4" fill="#10f010"/><rect x="314" y="366" width="1" height="4" fill="#10f010"/><rect x="315" y="366" width="1" height="4" fill="#10f010"/><rect x="316" y="367" width="1" height="3" fill="#10f010"/><rect x="317" y="367" width="1" height="3" fill="#10f010"/><rect x="318" y="366" width="1" height="4" fill="#10f010"/><rect x="319" y="367" width="1" height="3" fill="#10f010"/><rect x="320" y="367" width="1" height="3" fill="#10f010"/><rect x="321" y="366" width="1" height="4" fill="#10f010"/><rect x="322" y="367" width="1" height="3" fill="#10f010"/><rect x="323" y="367" width="1" height="3" fill="#10f010"/><rect x="324" y="366" width="1" height="4" fill="#10f010"/><rect x="325" y="366" width="1" height="4" fill="#10f010"/><rect x="326" y="367" width="1" height="3" fill="#10f010"/><rect x="327" y="366" width="1" height="4" fill="#10f010"/><rect x="328" y="367" width="1" height="3" fill="#10f010"/><rect x="329" y="366" width="1" height="4" fill="#10f010"/><rect x="330" y="367" width="1" height="3" fill="#10f010"/><rect x="331" y="367" width="1" height="3" fill="#10f010"/><rect x="332" y="366" width="1" height="4" fill="#10f010"/><rect x="333" y="367" width="1" height="3" fill="#10f010"/><rect x="334" y="367" width="1" height="3" fill="#10f010"/><rect x="335" y="367" width="1" height="3" fill="#10f010"/><rect x="336" y="366" width="1" height="4" fill="#10f010"/><rect x="337" y="367" width="1" height="3" fill="#10f010"/><rect x="338" y="367" width="1" height="3" fill="#10f010"/><rect x="339" y="367" width="1" height="3" fill="#10f010"/><rect x="340" y="366" width="1" height="4" fill="#10f010"/><rect x="341" y="366" width="1" height="4" fill="#10f010"/><rect x="342" y="366" width="1" height="4" fill="#10f010"/><rect x="343" y="367" width="1" height="3" fill="#10f010"/><rect x="344" y="367" width="1" height="3" fill="#10f010"/><rect x="345" y="367" width="1" height="3" fill="#10f010"/><rect x="346" y="366" width="1" height="4" fill="#10f010"/><rect x="347" y="367" width="1" height="3" fill="#10f010"/><rect x="348" y="366" width="1" height="4" fill="#10f010"/><rect x="349" y="367" width="1" height="3" fill="#10f010"/><rect x="350" y="366" width="1" height="4" fill="#10f010"/><rect x="351" y="367" width="1" height="3" fill="#10f010"/><rect x="352" y="367" width="1" height="4" fill="#10f010"/><rect x="353" y="366" width="1" height="4" fill="#10f010"/><rect x="354" y="367" width="1" height="3" fill="#10f010"/><rect x="355" y="367" width="1" height="3" fill="#10f010"/><rect x="356" y="366" width="1" height="4" fill="#10f010"/><rect x="357" y="367" width="1" height="3" fill="#10f010"/><rect x="358" y="367" width="1" height="3" fill="#10f010"/><rect x="359" y="367" width="1" height="3" fill="#10f010"/><rect x="360" y="366" width="1" height="4" fill="#10f010"/><rect x="361" y="366" width="1" height="4" fill="#10f010"/><rect x="362" y="366" width="1" height="4" fill="#10f010"/><rect x="363" y="366" width="1" height="4" fill="#10f010"/><rect x="364" y="366" width="1" height="4" fill="#10f010"/><rect x="365" y="366" width="1" height="4" fill="#10f010"/><rect x="366" y="367" width="1" height="3" fill="#10f010"/><rect x="367" y="367" width="1" height="3" fill="#10f010"/><rect x="368" y="367" width="1" height="5" fill="#10f010"/><rect x="369" y="367" width="1" height="3" fill="#10f010"/><rect x="370" y="366" width="1" height="4" fill="#10f010"/><rect x="371" y="367" width="1" height="3" fill="#10f010"/><rect x="372" y="367" width="1" height="3" fill="#10f010"/><rect x="373" y="367" width="1" height="3" fill="#10f010"/><rect x="374" y="367" width="1" height="3" fill="#10f010"/><rect x="375" y="366" width="1" height="4" fill="#10f010"/><rect x="376" y="367" width="1" height="3" fill="#10f010"/><rect x="474" y="366" width="1" height="4" fill="#10f010"/><rect x="475" y="366" width="1" height="4" fill="#10f010"/><rect x="476" y="366" width="1" height="4" fill="#10f010"/><rect x="477" y="366" width="1" height="4" fill="#10f010"/><rect x="478" y="367" width="1" height="3" fill="#10f010"/><rect x="479" y="367" width="1" height="4" fill="#10f010"/><rect x="480" y="367" width="1" height="3" fill="#10f010"/><rect x="481" y="367" width="1" height="3" fill="#10f010"/><rect x="482" y="366" width="1" height="4" fill="#10f010"/><rect x="483" y="366" width="1" height="4" fill="#10f010"/><rect x="484" y="367" width="1" height="3" fill="#10f010"/><rect x="485" y="367" width="1" height="3" fill="#10f010"/><rect x="486" y="367" width="1" height="3" fill="#10f010"/><rect x="487" y="366" width="1" height="4" fill="#10f010"/><rect x="488" y="366" width="1" height="4" fill="#10f010"/><rect x="489" y="366" width="1" height="4" fill="#10f010"/><rect x="490" y="366" width="1" height="4" fill="#10f010"/><rect x="491" y="367" width="1" height="3" fill="#10f010"/><rect x="492" y="366" width="1" height="4" fill="#10f010"/><rect x="493" y="366" width="1" height="4" fill="#10f010"/><rect x="494" y="367" width="1" height="4" fill="#10f010"/><rect x="495" y="367" width="1" height="3" fill="#10f010"/><rect x="496" y="366" width="1" height="4" fill="#10f010"/><rect x="497" y="367" width="1" height="3" fill="#10f010"/><rect x="498" y="367" width="1" height="3" fill="#10f010"/><rect x="499" y="367" width="1" height="3" fill="#10f010"/><rect x="500" y="367" width="1" height="3" fill="#10f010"/><rect x="501" y="367" width="1" height="3" fill="#10f010"/><rect x="502" y="367" width="1" height="3" fill="#10f010"/><rect x="503" y="366" width="1" height="4" fill="#10f010"/><rect x="504" y="367" width="1" height="3" fill="#10f010"/><rect x="505" y="367" width="1" height="3" fill="#10f010"/><rect x="506" y="366" width="1" height="4" fill="#10f010"/><rect x="507" y="366" width="1" height="4" fill="#10f010"/><rect x="508" y="367" width="1" height="3" fill="#10f010"/><rect x="509" y="366" width="1" height="4" fill="#10f010"/><rect x="510" y="367" width="1" height="3" fill="#10f010"/><rect x="511" y="367" width="1" height="3" fill="#10f010"/><rect x="512" y="366" width="1" height="4" fill="#10f010"/><rect x="513" y="367" width="1" height="3" fill="#10f010"/><rect x="514" y="366" width="1" height="4" fill="#10f010"/><rect x="515" y="367" width="1" height="3" fill="#10f010"/><rect x="516" y="367" width="1" height="3" fill="#10f010"/><rect x="517" y="367" width="1" height="5" fill="#10f010"/><rect x="518" y="367" width="1" height="3" fill="#10f010"/><rect x="519" y="366" width="1" height="4" fill="#10f010"/><rect x="520" y="367" width="1" height="3" fill="#10f010"/><rect x="521" y="366" width="1" height="4" fill="#10f010"/><rect x="522" y="366" width="1" height="4" fill="#10f010"/><rect x="523" y="366" width="1" height="4" fill="#10f010"/><rect x="524" y="367" width="1" height="3" fill="#10f010"/><rect x="525" y="367" width="1" height="3" fill="#10f010"/><rect x="526" y="366" width="1" height="4" fill="#10f010"/><rect x="527" y="367" width="1" height="5" fill="#10f010"/><rect x="528" y="367" width="1" height="3" fill="#10f010"/><rect x="529" y="367" width="1" height="4" fill="#10f010"/><rect x="530" y="367" width="1" height="3" fill="#10f010"/><rect x="531" y="366" width="1" height="4" fill="#10f010"/><rect x="532" y="366" width="1" height="4" fill="#10f010"/><rect x="533" y="367" width="1" height="3" fill="#10f010"/><rect x="534" y="366" width="1" height="4" fill="#10f010"/><rect x="535" y="367" width="1" height="3" fill="#10f010"/><rect x="536" y="366" width="1" height="4" fill="#10f010"/><rect x="537" y="367" width="1" height="3" fill="#10f010"/><rect x="538" y="366" width="1" height="4" fill="#10f010"/><rect x="539" y="367" width="1" height="3" fill="#10f010"/><rect x="540" y="366" width="1" height="4" fill="#10f010"/><rect x="541" y="366" width="1" height="4" fill="#10f010"/><rect x="542" y="366" width="1" height="4" fill="#10f010"/><rect x="543" y="367" width="1" height="3" fill="#10f010"/><rect x="544" y="366" width="1" height="4" fill="#10f010"/><rect x="545" y="366" width="1" height="4" fill="#10f010"/><rect x="546" y="367" width="1" height="3" fill="#10f010"/><rect x="547" y="367" width="1" height="3" fill="#10f010"/><rect x="548" y="366" width="1" height="4" fill="#10f010"/><rect x="549" y="366" width="1" height="4" fill="#10f010"/><rect x="550" y="367" width="1" height="3" fill="#10f010"/><rect x="551" y="367" width="1" height="5" fill="#10f010"/><rect x="552" y="367" width="1" height="3" fill="#10f010"/><rect x="553" y="367" width="1" height="3" fill="#10f010"/><rect x="554" y="367" width="1" height="4" fill="#10f010"/><rect x="555" y="367" width="1" height="3" fill="#10f010"/><rect x="556" y="367" width="1" height="3" fill="#10f010"/><rect x="557" y="366" width="1" height="4" fill="#10f010"/><rect x="558" y="367" width="1" height="3" fill="#10f010"/><rect x="559" y="366" width="1" height="4" fill="#10f010"/><rect x="560" y="366" width="1" height="4" fill="#10f010"/><rect x="561" y="367" width="1" height="4" fill="#10f010"/><rect x="562" y="367" width="1" height="3" fill="#10f010"/><rect x="563" y="367" width="1" height="3" fill="#10f010"/><rect x="564" y="367" width="1" height="3" fill="#10f010"/><rect x="565" y="367" width="1" height="3" fill="#10f010"/><rect x="566" y="367" width="1" height="3" fill="#10f010"/><rect x="567" y="367" width="1" height="5" fill="#10f010"/><rect x="568" y="367" width="1" height="3" fill="#10f010"/><rect x="569" y="367" width="1" height="3" fill="#10f010"/><rect x="570" y="367" width="1" height="3" fill="#10f010"/><rect x="571" y="366" width="1" height="4" fill="#10f010"/><rect x="572" y="367" width="1" height="3" fill="#10f010"/><rect x="573" y="366" width="1" height="4" fill="#10f010"/><rect x="574" y="366" width="1" height="4" fill="#10f010"/><rect x="673" y="366" width="1" height="4" fill="#10f010"/><rect x="674" y="367" width="1" height="4" fill="#10f010"/><rect x="675" y="366" width="1" height="4" fill="#10f010"/><rect x="676" y="367" width="1" height="3" fill="#10f010"/><rect x="677" y="366" width="1" height="4" fill="#10f010"/><rect x="678" y="367" width="1" height="3" fill="#10f010"/><rect x="679" y="367" width="1" height="3" fill="#10f010"/><rect x="680" y="366" width="1" height="4" fill="#10f010"/><rect x="681" y="367" width="1" height="3" fill="#10f010"/><rect x="682" y="366" width="1" height="4" fill="#10f010"/><rect x="683" y="366" width="1" height="4" fill="#10f010"/><rect x="684" y="367" width="1" height="3" fill="#10f010"/><rect x="685" y="366" width="1" height="4" fill="#10f010"/><rect x="686" y="366" width="1" height="4" fill="#10f010"/><rect x="687" y="367" width="1" height="3" fill="#10f010"/><rect x="688" y="367" width="1" height="3" fill="#10f010"/><rect x="689" y="366" width="1" height="4" fill="#10f010"/><rect x="690" y="367" width="1" height="3" fill="#10f010"/><rect x="691" y="366" width="1" height="4" fill="#10f010"/><rect x="692" y="367" width="1" height="3" fill="#10f010"/><rect x="693" y="367" width="1" height="3" fill="#10f010"/><rect x="694" y="367" width="1" height="3" fill="#10f010"/><rect x="695" y="367" width="1" height="3" fill="#10f010"/><rect x="696" y="367" width="1" height="3" fill="#10f010"/><rect x="697" y="366" width="1" height="4" fill="#10f010"/><rect x="698" y="366" width="1" height="4" fill="#10f010"/><rect x="699" y="367" width="1" height="3" fill="#10f010"/><rect x="700" y="367" width="1" height="3" fill="#10f010"/><rect x="701" y="367" width="1" height="3" fill="#10f010"/><rect x="702" y="366" width="1" height="4" fill="#10f010"/><rect x="703" y="367" width="1" height="3" fill="#10f010"/><rect x="704" y="367" width="1" height="3" fill="#10f010"/><rect x="705" y="367" width="1" height="3" fill="#10f010"/><rect x="706" y="366" width="1" height="4" fill="#10f010"/><rect x="707" y="367" width="1" height="5" fill="#10f010"/><rect x="708" y="367" width="1" height="3" fill="#10f010"/><rect x="709" y="366" width="1" height="4" fill="#10f010"/><rect x="710" y="366" width="1" height="4" fill="#10f010"/><rect x="711" y="367" width="1" height="3" fill="#10f010"/><rect x="712" y="367" width="1" height="3" fill="#10f010"/><rect x="713" y="367" width="1" height="3" fill="#10f010"/><rect x="714" y="367" width="1" height="4" fill="#10f010"/><rect x="715" y="367" width="1" height="3" fill="#10f010"/><rect x="716" y="367" width="1" height="3" fill="#10f010"/><rect x="717" y="367" width="1" height="3" fill="#10f010"/><rect x="718" y="367" width="1" height="3" fill="#10f010"/><rect x="719" y="367" width="1" height="3" fill="#10f010"/><rect x="720" y="367" width="1" height="3" fill="#10f010"/><rect x="721" y="366" width="1" height="4" fill="#10f010"/><rect x="722" y="367" width="1" height="3" fill="#10f010"/><rect x="723" y="367" width="1" height="3" fill="#10f010"/><rect x="724" y="367" width="1" height="3" fill="#10f010"/><rect x="725" y="367" width="1" height="3" fill="#10f010"/><rect x="726" y="366" width="1" height="4" fill="#10f010"/><rect x="727" y="366" width="1" height="4" fill="#10f010"/><rect x="728" y="366" width="1" height="4" fill="#10f010"/><rect x="729" y="366" width="1" height="4" fill="#10f010"/><rect x="730" y="367" width="1" height="3" fill="#10f010"/><rect x="731" y="366" width="1" height="4" fill="#10f010"/><rect x="732" y="366" width="1" height="4" fill="#10f010"/><rect x="733" y="367" width="1" height="3" fill="#10f010"/><rect x="734" y="367" width="1" height="3" fill="#10f010"/><rect x="735" y="367" width="1" height="3" fill="#10f010"/><rect x="736" y="367" width="1" height="3" fill="#10f010"/><rect x="737" y="367" width="1" height="3" fill="#10f010"/><rect x="738" y="367" width="1" height="3" fill="#10f010"/><rect x="739" y="366" width="1" height="4" fill="#10f010"/><rect x="740" y="366" width="1" height="4" fill="#10f010"/><rect x="741" y="367" width="1" height="3" fill="#10f010"/><rect x="742" y="367" width="1" height="4" fill="#10f010"/><rect x="743" y="366" width="1" height="4" fill="#10f010"/><rect x="744" y="367" width="1" height="3" fill="#10f010"/><rect x="745" y="367" width="1" height="3" fill="#10f010"/><rect x="746" y="366" width="1" height="4" fill="#10f010"/><rect x="747" y="367" width="1" height="3" fill="#10f010"/><rect x="748" y="367" width="1" height="3" fill="#10f010"/><rect x="749" y="366" width="1" height="4" fill="#10f010"/><rect x="750" y="367" width="1" height="3" fill="#10f010"/><rect x="751" y="366" width="1" height="4" fill="#10f010"/><rect x="752" y="367" width="1" height="3" fill="#10f010"/><rect x="753" y="367" width="1" height="3" fill="#10f010"/><rect x="754" y="366" width="1" height="4" fill="#10f010"/><rect x="755" y="367" width="1" height="3" fill="#10f010"/><rect x="756" y="366" width="1" height="4" fill="#10f010"/><rect x="757" y="366" width="1" height="4" fill="#10f010"/><rect x="758" y="366" width="1" height="4" fill="#10f010"/><rect x="759" y="367" width="1" height="3" fill="#10f010"/><rect x="760" y="367" width="1" height="3" fill="#10f010"/><rect x="761" y="367" width="1" height="3" fill="#10f010"/><rect x="762" y="367" width="1" height="3" fill="#10f010"/><rect x="763" y="367" width="1" height="3" fill="#10f010"/><rect x="764" y="367" width="1" height="3" fill="#10f010"/><rect x="765" y="366" width="1" height="4" fill="#10f010"/><rect x="766" y="367" width="1" height="4" fill="#10f010"/><rect x="767" y="367" width="1" height="3" fill="#10f010"/><rect x="768" y="367" width="1" height="3" fill="#10f010"/><rect x="769" y="367" width="1" height="3" fill="#10f010"/><rect x="770" y="367" width="1" height="3" fill="#10f010"/><rect x="771" y="367" width="1" height="3" fill="#10f010"/><rect x="772" y="367" width="1" height="3" fill="#10f010"/><rect x="773" y="367" width="1" height="3" fill="#10f010"/><rect x="774" y="367" width="1" height="3" fill="#10f010"/><rect x="775" y="367" width="1" height="3" fill="#10f010"/><rect x="776" y="367" width="1" height="3" fill="#10f010"/><rect x="16" y="380" width="1" height="4" fill="#10f010"/><rect x="17" y="379" width="1" height="5" fill="#10f010"/><rect x="18" y="379" width="1" height="5" fill="#10f010"/><rect x="19" y="379" width="1" height="5" fill="#10f010"/><rect x="20" y="380" width="1" height="4" fill="#10f010"/><rect x="21" y="379" width="1" height="5" fill="#10f010"/><rect x="22" y="380" width="1" height="4" fill="#10f010"/><rect x="23" y="380" width="1" height="4" fill="#10f010"/><rect x="24" y="380" width="1" height="4" fill="#10f010"/><rect x="25" y="380" width="1" height="4" fill="#10f010"/><rect x="26" y="379" width="1" height="5" fill="#10f010"/><rect x="27" y="379" width="1" height="5" fill="#10f010"/><rect x="28" y="380" width="1" height="4" fill="#10f010"/><rect x="29" y="380" width="1" height="4" fill="#10f010"/><rect x="30" y="380" width="1" height="4" fill="#10f010"/><rect x="31" y="380" width="1" height="4" fill="#10f010"/><rect x="32" y="380" width="1" height="4" fill="#10f010"/><rect x="33" y="379" width="1" height="5" fill="#10f010"/><rect x="34" y="380" width="1" height="4" fill="#10f010"/><rect x="35" y="380" width="1" height="4" fill="#10f010"/><rect x="206" y="380" width="1" height="4" fill="#10f010"/><rect x="207" y="379" width="1" height="5" fill="#10f010"/><rect x="208" y="380" width="1" height="4" fill="#10f010"/><rect x="209" y="380" width="1" height="4" fill="#10f010"/><rect x="210" y="380" width="1" height="4" fill="#10f010"/><rect x="211" y="380" width="1" height="4" fill="#10f010"/><rect x="212" y="380" width="1" height="4" fill="#10f010"/><rect x="213" y="380" width="1" height="4" fill="#10f010"/><rect x="214" y="379" width="1" height="5" fill="#10f010"/><rect x="215" y="379" width="1" height="5" fill="#10f010"/><rect x="216" y="380" width="1" height="4" fill="#10f010"/><rect x="217" y="380" width="1" height="4" fill="#10f010"/><rect x="218" y="380" width="1" height="4" fill="#10f010"/><rect x="219" y="380" width="1" height="4" fill="#10f010"/><rect x="220" y="380" width="1" height="4" fill="#10f010"/><rect x="221" y="379" width="1" height="5" fill="#10f010"/><rect x="222" y="379" width="1" height="5" fill="#10f010"/><rect x="223" y="380" width="1" height="4" fill="#10f010"/><rect x="224" y="379" width="1" height="5" fill="#10f010"/><rect x="225" y="379" width="1" height="5" fill="#10f010"/><rect x="226" y="380" width="1" height="4" fill="#10f010"/><rect x="227" y="379" width="1" height="5" fill="#10f010"/><rect x="228" y="380" width="1" height="4" fill="#10f010"/><rect x="229" y="379" width="1" height="5" fill="#10f010"/><rect x="230" y="380" width="1" height="4" fill="#10f010"/><rect x="231" y="379" width="1" height="5" fill="#10f010"/><rect x="232" y="380" width="1" height="5" fill="#10f010"/><rect x="233" y="379" width="1" height="5" fill="#10f010"/><rect x="234" y="380" width="1" height="4" fill="#10f010"/><rect x="235" y="380" width="1" height="4" fill="#10f010"/><rect x="236" y="380" width="1" height="4" fill="#10f010"/><rect x="237" y="379" width="1" height="5" fill="#10f010"/><rect x="238" y="380" width="1" height="4" fill="#10f010"/><rect x="239" y="380" width="1" height="4" fill="#10f010"/><rect x="409" y="380" width="1" height="4" fill="#10f010"/><rect x="410" y="379" width="1" height="5" fill="#10f010"/><rect x="411" y="380" width="1" height="4" fill="#10f010"/><rect x="412" y="379" width="1" height="5" fill="#10f010"/><rect x="413" y="379" width="1" height="5" fill="#10f010"/><rect x="414" y="380" width="1" height="4" fill="#10f010"/><rect x="415" y="380" width="1" height="4" fill="#10f010"/><rect x="416" y="379" width="1" height="5" fill="#10f010"/><rect x="417" y="379" width="1" height="5" fill="#10f010"/><rect x="418" y="380" width="1" height="4" fill="#10f010"/><rect x="419" y="380" width="1" height="4" fill="#10f010"/><rect x="420" y="379" width="1" height="5" fill="#10f010"/><rect x="421" y="379" width="1" height="5" fill="#10f010"/><rect x="422" y="379" width="1" height="5" fill="#10f010"/><rect x="423" y="380" width="1" height="4" fill="#10f010"/><rect x="424" y="379" width="1" height="5" fill="#10f010"/><rect x="425" y="380" width="1" height="4" fill="#10f010"/><rect x="426" y="379" width="1" height="5" fill="#10f010"/><rect x="427" y="380" width="1" height="4" fill="#10f010"/><rect x="428" y="380" width="1" height="4" fill="#10f010"/><rect x="429" y="380" width="1" height="4" fill="#10f010"/><rect x="430" y="379" width="1" height="5" fill="#10f010"/><rect x="431" y="380" width="1" height="4" fill="#10f010"/><rect x="432" y="379" width="1" height="5" fill="#10f010"/><rect x="433" y="380" width="1" height="4" fill="#10f010"/><rect x="434" y="379" width="1" height="5" fill="#10f010"/><rect x="435" y="380" width="1" height="4" fill="#10f010"/><rect x="436" y="380" width="1" height="4" fill="#10f010"/><rect x="437" y="379" width="1" height="5" fill="#10f010"/><rect x="438" y="380" width="1" height="4" fill="#10f010"/><rect x="439" y="379" width="1" height="5" fill="#10f010"/><rect x="440" y="379" width="1" height="5" fill="#10f010"/><rect x="441" y="380" width="1" height="4" fill="#10f010"/><rect x="442" y="380" width="1" height="4" fill="#10f010"/><rect x="612" y="379" width="1" height="5" fill="#10f010"/><rect x="613" y="379" width="1" height="5" fill="#10f010"/><rect x="614" y="379" width="1" height="5" fill="#10f010"/><rect x="615" y="380" width="1" height="4" fill="#10f010"/><rect x="616" y="380" width="1" height="4" fill="#10f010"/><rect x="617" y="380" width="1" height="4" fill="#10f010"/><rect x="618" y="380" width="1" height="6" fill="#10f010"/><rect x="619" y="379" width="1" height="5" fill="#10f010"/><rect x="620" y="380" width="1" height="4" fill="#10f010"/><rect x="621" y="379" width="1" height="5" fill="#10f010"/><rect x="622" y="379" width="1" height="5" fill="#10f010"/><rect x="623" y="379" width="1" height="5" fill="#10f010"/><rect x="624" y="379" width="1" height="5" fill="#10f010"/><rect x="625" y="379" width="1" height="5" fill="#10f010"/><rect x="626" y="380" width="1" height="4" fill="#10f010"/><rect x="627" y="379" width="1" height="5" fill="#10f010"/><rect x="628" y="380" width="1" height="4" fill="#10f010"/><rect x="629" y="379" width="1" height="5" fill="#10f010"/><rect x="630" y="380" width="1" height="4" fill="#10f010"/><rect x="631" y="380" width="1" height="4" fill="#10f010"/><rect x="632" y="380" width="1" height="4" fill="#10f010"/><rect x="633" y="379" width="1" height="5" fill="#10f010"/><rect x="634" y="380" width="1" height="4" fill="#10f010"/><rect x="36" y="366" width="1" height="18" fill="#10f010"/><rect x="37" y="366" width="1" height="18" fill="#10f010"/><rect x="38" y="365" width="1" height="19" fill="#10f010"/><rect x="39" y="365" width="1" height="19" fill="#10f010"/><rect x="40" y="364" width="1" height="20" fill="#10f010"/><rect x="41" y="366" width="1" height="18" fill="#10f010"/><rect x="42" y="365" width="1" height="19" fill="#10f010"/><rect x="43" y="365" width="1" height="19" fill="#10f010"/><rect x="44" y="365" width="1" height="19" fill="#10f010"/><rect x="45" y="366" width="1" height="18" fill="#10f010"/><rect x="46" y="366" width="1" height="18" fill="#10f010"/><rect x="47" y="366" width="1" height="18" fill="#10f010"/><rect x="48" y="366" width="1" height="18" fill="#10f010"/><rect x="49" y="365" width="1" height="19" fill="#10f010"/><rect x="50" y="366" width="1" height="18" fill="#10f010"/><rect x="51" y="366" width="1" height="20" fill="#10f010"/><rect x="52" y="366" width="1" height="18" fill="#10f010"/><rect x="53" y="366" width="1" height="18" fill="#10f010"/><rect x="54" y="365" width="1" height="19" fill="#10f010"/><rect x="55" y="365" width="1" height="19" fill="#10f010"/><rect x="56" y="366" width="1" height="18" fill="#10f010"/><rect x="57" y="366" width="1" height="18" fill="#10f010"/><rect x="58" y="366" width="1" height="18" fill="#10f010"/><rect x="59" y="366" width="1" height="18" fill="#10f010"/><rect x="60" y="364" width="1" height="21" fill="#10f010"/><rect x="61" y="366" width="1" height="18" fill="#10f010"/><rect x="62" y="366" width="1" height="18" fill="#10f010"/><rect x="63" y="366" width="1" height="18" fill="#10f010"/><rect x="64" y="365" width="1" height="19" fill="#10f010"/><rect x="175" y="366" width="1" height="18" fill="#10f010"/><rect x="176" y="365" width="1" height="19" fill="#10f010"/><rect x="177" y="366" width="1" height="18" fill="#10f010"/><rect x="178" y="366" width="1" height="19" fill="#10f010"/><rect x="179" y="365" width="1" height="19" fill="#10f010"/><rect x="180" y="365" width="1" height="19" fill="#10f010"/><rect x="181" y="366" width="1" height="19" fill="#10f010"/><rect x="182" y="366" width="1" height="18" fill="#10f010"/><rect x="183" y="365" width="1" height="19" fill="#10f010"/><rect x="184" y="366" width="1" height="18" fill="#10f010"/><rect x="185" y="364" width="1" height="20" fill="#10f010"/><rect x="186" y="366" width="1" height="18" fill="#10f010"/><rect x="187" y="365" width="1" height="19" fill="#10f010"/><rect x="188" y="366" width="1" height="18" fill="#10f010"/><rect x="189" y="365" width="1" height="19" fill="#10f010"/><rect x="190" y="366" width="1" height="19" fill="#10f010"/><rect x="191" y="365" width="1" height="19" fill="#10f010"/><rect x="192" y="366" width="1" height="18" fill="#10f010"/><rect x="193" y="366" width="1" height="18" fill="#10f010"/><rect x="194" y="365" width="1" height="19" fill="#10f010"/><rect x="195" y="366" width="1" height="18" fill="#10f010"/><rect x="196" y="366" width="1" height="18" fill="#10f010"/><rect x="197" y="365" width="1" height="19" fill="#10f010"/><rect x="198" y="366" width="1" height="18" fill="#10f010"/><rect x="199" y="366" width="1" height="18" fill="#10f010"/><rect x="200" y="366" width="1" height="18" fill="#10f010"/><rect x="201" y="366" width="1" height="19" fill="#10f010"/><rect x="202" y="366" width="1" height="18" fill="#10f010"/><rect x="203" y="366" width="1" height="18" fill="#10f010"/><rect x="204" y="365" width="1" height="19" fill="#10f010"/><rect x="205" y="365" width="1" height="19" fill="#10f010"/><rect x="211" y="366" width="1" height="18" fill="#10f010"/><rect x="212" y="366" width="1" height="18" fill="#10f010"/><rect x="213" y="366" width="1" height="18" fill="#10f010"/><rect x="240" y="365" width="1" height="20" fill="#10f010"/><rect x="241" y="366" width="1" height="18" fill="#10f010"/><rect x="242" y="365" width="1" height="19" fill="#10f010"/><rect x="243" y="365" width="1" height="19" fill="#10f010"/><rect x="244" y="366" width="1" height="18" fill="#10f010"/><rect x="245" y="365" width="1" height="19" fill="#10f010"/><rect x="246" y="366" width="1" height="18" fill="#10f010"/><rect x="247" y="366" width="1" height="18" fill="#10f010"/><rect x="248" y="366" width="1" height="18" fill="#10f010"/><rect x="249" y="366" width="1" height="18" fill="#10f010"/><rect x="250" y="366" width="1" height="18" fill="#10f010"/><rect x="251" y="366" width="1" height="18" fill="#10f010"/><rect x="252" y="366" width="1" height="18" fill="#10f010"/><rect x="253" y="366" width="1" height="18" fill="#10f010"/><rect x="254" y="366" width="1" height="18" fill="#10f010"/><rect x="255" y="366" width="1" height="18" fill="#10f010"/><rect x="256" y="365" width="1" height="20" fill="#10f010"/><rect x="257" y="366" width="1" height="18" fill="#10f010"/><rect x="258" y="366" width="1" height="18" fill="#10f010"/><rect x="259" y="365" width="1" height="19" fill="#10f010"/><rect x="260" y="366" width="1" height="18" fill="#10f010"/><rect x="261" y="365" width="1" height="20" fill="#10f010"/><rect x="262" y="365" width="1" height="19" fill="#10f010"/><rect x="263" y="366" width="1" height="20" fill="#10f010"/><rect x="264" y="366" width="1" height="18" fill="#10f010"/><rect x="265" y="366" width="1" height="20" fill="#10f010"/><rect x="266" y="366" width="1" height="18" fill="#10f010"/><rect x="267" y="365" width="1" height="19" fill="#10f010"/><rect x="268" y="365" width="1" height="19" fill="#10f010"/><rect x="377" y="366" width="1" height="18" fill="#10f010"/><rect x="378" y="366" width="1" height="18" fill="#10f010"/><rect x="379" y="364" width="1" height="20" fill="#10f010"/><rect x="380" y="365" width="1" height="20" fill="#10f010"/><rect x="381" y="366" width="1" height="18" fill="#10f010"/><rect x="382" y="366" width="1" height="18" fill="#10f010"/><rect x="383" y="366" width="1" height="18" fill="#10f010"/><rect x="384" y="366" width="1" height="18" fill="#10f010"/><rect x="385" y="366" width="1" height="18" fill="#10f010"/><rect x="386" y="366" width="1" height="18" fill="#10f010"/><rect x="387" y="365" width="1" height="19" fill="#10f010"/><rect x="388" y="366" width="1" height="18" fill="#10f010"/><rect x="389" y="366" width="1" height="18" fill="#10f010"/><rect x="390" y="366" width="1" height="18" fill="#10f010"/><rect x="391" y="365" width="1" height="19" fill="#10f010"/><rect x="392" y="366" width="1" height="18" fill="#10f010"/><rect x="393" y="366" width="1" height="18" fill="#10f010"/><rect x="394" y="366" width="1" height="18" fill="#10f010"/><rect x="395" y="366" width="1" height="18" fill="#10f010"/><rect x="396" y="366" width="1" height="18" fill="#10f010"/><rect x="397" y="365" width="1" height="19" fill="#10f010"/><rect x="398" y="365" width="1" height="19" fill="#10f010"/><rect x="399" y="366" width="1" height="20" fill="#10f010"/><rect x="400" y="365" width="1" height="19" fill="#10f010"/><rect x="401" y="365" width="1" height="19" fill="#10f010"/><rect x="402" y="365" width="1" height="19" fill="#10f010"/><rect x="403" y="366" width="1" height="18" fill="#10f010"/><rect x="404" y="366" width="1" height="18" fill="#10f010"/><rect x="405" y="366" width="1" height="18" fill="#10f010"/><rect x="406" y="366" width="1" height="18" fill="#10f010"/><rect x="407" y="366" width="1" height="18" fill="#10f010"/><rect x="408" y="366" width="1" height="18" fill="#10f010"/><rect x="430" y="365" width="1" height="19" fill="#10f010"/><rect x="431" y="366" width="1" height="18" fill="#10f010"/><rect x="432" y="366" width="1" height="18" fill="#10f010"/><rect x="433" y="365" width="1" height="19" fill="#10f010"/><rect x="443" y="366" width="1" height="18" fill="#10f010"/><rect x="444" y="366" width="1" height="18" fill="#10f010"/><rect x="445" y="366" width="1" height="18" fill="#10f010"/><rect x="446" y="366" width="1" height="18" fill="#10f010"/><rect x="447" y="365" width="1" height="19" fill="#10f010"/><rect x="448" y="366" width="1" height="18" fill="#10f010"/><rect x="449" y="366" width="1" height="18" fill="#10f010"/><rect x="450" y="366" width="1" height="18" fill="#10f010"/><rect x="451" y="366" width="1" height="18" fill="#10f010"/><rect x="452" y="366" width="1" height="19" fill="#10f010"/><rect x="453" y="365" width="1" height="19" fill="#10f010"/><rect x="454" y="366" width="1" height="20" fill="#10f010"/><rect x="455" y="366" width="1" height="18" fill="#10f010"/><rect x="456" y="366" width="1" height="18" fill="#10f010"/><rect x="457" y="366" width="1" height="18" fill="#10f010"/><rect x="458" y="366" width="1" height="18" fill="#10f010"/><rect x="459" y="365" width="1" height="19" fill="#10f010"/><rect x="460" y="366" width="1" height="18" fill="#10f010"/><rect x="461" y="366" width="1" height="18" fill="#10f010"/><rect x="462" y="365" width="1" height="19" fill="#10f010"/><rect x="463" y="364" width="1" height="20" fill="#10f010"/><rect x="464" y="366" width="1" height="18" fill="#10f010"/><rect x="465" y="366" width="1" height="18" fill="#10f010"/><rect x="466" y="366" width="1" height="18" fill="#10f010"/><rect x="467" y="365" width="1" height="19" fill="#10f010"/><rect x="468" y="365" width="1" height="19" fill="#10f010"/><rect x="469" y="366" width="1" height="18" fill="#10f010"/><rect x="470" y="366" width="1" height="18" fill="#10f010"/><rect x="471" y="365" width="1" height="19" fill="#10f010"/><rect x="472" y="366" width="1" height="20" fill="#10f010"/><rect x="473" y="366" width="1" height="18" fill="#10f010"/><rect x="575" y="365" width="1" height="19" fill="#10f010"/><rect x="576" y="366" width="1" height="18" fill="#10f010"/><rect x="579" y="365" width="1" height="19" fill="#10f010"/><rect x="580" y="365" width="1" height="19" fill="#10f010"/><rect x="581" y="366" width="1" height="19" fill="#10f010"/><rect x="582" y="366" width="1" height="18" fill="#10f010"/><rect x="583" y="366" width="1" height="18" fill="#10f010"/><rect x="584" y="366" width="1" height="18" fill="#10f010"/><rect x="585" y="366" width="1" height="18" fill="#10f010"/><rect x="586" y="366" width="1" height="18" fill="#10f010"/><rect x="587" y="366" width="1" height="18" fill="#10f010"/><rect x="588" y="366" width="1" height="18" fill="#10f010"/><rect x="589" y="366" width="1" height="18" fill="#10f010"/><rect x="590" y="366" width="1" height="18" fill="#10f010"/><rect x="591" y="366" width="1" height="18" fill="#10f010"/><rect x="592" y="366" width="1" height="18" fill="#10f010"/><rect x="593" y="365" width="1" height="19" fill="#10f010"/><rect x="594" y="365" width="1" height="19" fill="#10f010"/><rect x="595" y="366" width="1" height="18" fill="#10f010"/><rect x="596" y="366" width="1" height="18" fill="#10f010"/><rect x="597" y="364" width="1" height="20" fill="#10f010"/><rect x="598" y="366" width="1" height="18" fill="#10f010"/><rect x="599" y="366" width="1" height="18" fill="#10f010"/><rect x="600" y="365" width="1" height="19" fill="#10f010"/><rect x="601" y="366" width="1" height="18" fill="#10f010"/><rect x="602" y="366" width="1" height="18" fill="#10f010"/><rect x="603" y="366" width="1" height="18" fill="#10f010"/><rect x="604" y="365" width="1" height="19" fill="#10f010"/><rect x="606" y="366" width="1" height="18" fill="#10f010"/><rect x="607" y="366" width="1" height="18" fill="#10f010"/><rect x="608" y="365" width="1" height="19" fill="#10f010"/><rect x="609" y="365" width="1" height="19" fill="#10f010"/><rect x="610" y="366" width="1" height="18" fill="#10f010"/><rect x="611" y="365" width="1" height="19" fill="#10f010"/><rect x="635" y="366" width="1" height="18" fill="#10f010"/><rect x="636" y="366" width="1" height="18" fill="#10f010"/><rect x="637" y="365" width="1" height="19" fill="#10f010"/><rect x="638" y="366" width="1" height="18" fill="#10f010"/><rect x="639" y="366" width="1" height="19" fill="#10f010"/><rect x="640" y="366" width="1" height="18" fill="#10f010"/><rect x="641" y="366" width="1" height="18" fill="#10f010"/><rect x="642" y="365" width="1" height="19" fill="#10f010"/><rect x="643" y="366" width="1" height="18" fill="#10f010"/><rect x="644" y="366" width="1" height="18" fill="#10f010"/><rect x="645" y="366" width="1" height="19" fill="#10f010"/><rect x="646" y="366" width="1" height="18" fill="#10f010"/><rect x="647" y="365" width="1" height="19" fill="#10f010"/><rect x="648" y="366" width="1" height="19" fill="#10f010"/><rect x="649" y="365" width="1" height="19" fill="#10f010"/><rect x="650" y="364" width="1" height="20" fill="#10f010"/><rect x="651" y="366" width="1" height="18" fill="#10f010"/><rect x="652" y="366" width="1" height="18" fill="#10f010"/><rect x="653" y="366" width="1" height="18" fill="#10f010"/><rect x="654" y="365" width="1" height="19" fill="#10f010"/><rect x="655" y="366" width="1" height="18" fill="#10f010"/><rect x="656" y="366" width="1" height="18" fill="#10f010"/><rect x="657" y="366" width="1" height="18" fill="#10f010"/><rect x="658" y="366" width="1" height="18" fill="#10f010"/><rect x="659" y="366" width="1" height="18" fill="#10f010"/><rect x="660" y="366" width="1" height="18" fill="#10f010"/><rect x="661" y="366" width="1" height="18" fill="#10f010"/><rect x="662" y="366" width="1" height="18" fill="#10f010"/><rect x="663" y="366" width="1" height="18" fill="#10f010"/><rect x="664" y="366" width="1" height="19" fill="#10f010"/><rect x="665" y="366" width="1" height="18" fill="#10f010"/><rect x="666" y="366" width="1" height="18" fill="#10f010"/><rect x="667" y="366" width="1" height="18" fill="#10f010"/><rect x="668" y="365" width="1" height="19" fill="#10f010"/><rect x="669" y="365" width="1" height="20" fill="#10f010"/><rect x="670" y="366" width="1" height="18" fill="#10f010"/><rect x="671" y="366" width="1" height="18" fill="#10f010"/><rect x="672" y="366" width="1" height="18" fill="#10f010"/><rect x="777" y="365" width="1" height="19" fill="#10f010"/><rect x="778" y="366" width="1" height="18" fill="#10f010"/><rect x="779" y="366" width="1" height="18" fill="#10f010"/><rect x="780" y="366" width="1" height="18" fill="#10f010"/></g><polygon points="392,32 407,32 407,35 399.5,42.5 392,35" fill="#1a9cec"/><polygon points="0,169 8,169 15,176 8,183.5 0,183.5" fill="#f8f400"/><polygon points="0,177 8,177 15,184 8,191.5 0,191.5" fill="#f8f400"/><g shape-rendering="crispEdges" fill="#202000"><rect x="2" y="172" width="5" height="1" fill="#202000"/><rect x="4" y="172" width="1" height="7" fill="#202000"/><rect x="4" y="182" width="1" height="7" fill="#202000"/><rect x="2" y="188" width="5" height="1" fill="#202000"/></g><polygon points="0,375 8,375 14.5,382.3 8,389.6 0,389.6" fill="#10f010"/></svg>
<svg width="800" height="32" viewBox="0 0 800 32" style="position:absolute;left:0;top:0"><g fill="#1a78fa">
<path d="M16.9,2.3h7.1v9.4h7v-9.4h6.9v25.1h-6.9v-9.3h-7v9.3h-7.1z"/>
<path d="M43.4,7H57.3Q61.4,7 61.4,11.1V27.3H44.8Q41,27.3 41,23.5V9.4Q41,7 43.4,7z"/>
<path d="M63.6,7H77.8Q82.1,7 82.1,11.3V27.3H76.7V12.2H70.5V27.3H63.6z"/>
<path d="M86.6,2.2h6.8v4.7h6.6v5h-6.6v8.4q0,1.6 1.6,1.6h4.7v5.4h-9q-4.1,0 -4.1,-4v-11.4h-2.6v-5h2.6z"/>
<path d="M106.2,7H119.4Q123.5,7 123.5,11.1V20H109V22.4H125.3V27.3H106.2Q102.2,27.3 102.2,23.3V11Q102.2,7 106.2,7z"/>
<path d="M125.2,2.2H132V13.6L137.4,6.9H144.9L138.6,15.8L145.2,27.4H138L132,19.4V27.4H125.2z"/>
</g><g fill="#000"><rect x="47.4" y="11.7" width="6.4" height="2.6"/><rect x="41" y="13.6" width="6.6" height=".8" opacity=".75"/><rect x="47.6" y="19.5" width="6.2" height="3.2"/>
<rect x="109" y="11.9" width="9.8" height="3"/></g></svg>
<div class="box" style="left:165px;top:5px;width:68px;height:23px;background:#14ee14"></div>
<div class="box" style="left:250px;top:5px;width:20px;height:23px;background:#28c6e4"></div>
<div class="box" style="left:555px;top:5px;width:20px;height:23px;background:#28c6e4"></div>
<div class="box" style="left:670px;top:5px;width:20px;height:23px;background:#28c6e4"></div>
<span class="t" style="left:188.41px;top:8.95px;font-size:16.6px;color:#041c04;font-weight:bold;-webkit-text-stroke:0.3px #041c04;">T</span><span class="t" style="left:199.09px;top:8.95px;font-size:16.6px;color:#041c04;font-weight:bold;-webkit-text-stroke:0.3px #041c04;">D</span><span class="t" style="left:252.11px;top:6.35px;font-size:20.5px;color:#04141a;font-weight:bold;transform:scaleX(1.09);-webkit-text-stroke:0.2px #04141a;">H</span><span class="t" style="left:291.41px;top:9.03px;font-size:16.5px;color:#ffffff;transform:scaleX(1.04);-webkit-text-stroke:0.42px #ffffff;">5</span><span class="t" style="left:301.56px;top:9.03px;font-size:16.5px;color:#ffffff;transform:scaleX(1.04);-webkit-text-stroke:0.42px #ffffff;">m</span><span class="t" style="left:317.22px;top:9.03px;font-size:16.5px;color:#ffffff;transform:scaleX(1.04);-webkit-text-stroke:0.42px #ffffff;">s</span><span class="t" style="left:362.34px;top:9.03px;font-size:16.5px;color:#ffffff;-webkit-text-stroke:0.42px #ffffff;">5</span><span class="t" style="left:372.46px;top:9.03px;font-size:16.5px;color:#ffffff;-webkit-text-stroke:0.42px #ffffff;">0</span><span class="t" style="left:382.39px;top:9.03px;font-size:16.5px;color:#ffffff;-webkit-text-stroke:0.42px #ffffff;">.</span><span class="t" style="left:387.96px;top:9.03px;font-size:16.5px;color:#ffffff;-webkit-text-stroke:0.42px #ffffff;">0</span><span class="t" style="left:398.76px;top:9.03px;font-size:16.5px;color:#ffffff;-webkit-text-stroke:0.42px #ffffff;">0</span><span class="t" style="left:408.25px;top:9.03px;font-size:16.5px;color:#ffffff;-webkit-text-stroke:0.42px #ffffff;">K</span><span class="t" style="left:421.25px;top:9.03px;font-size:16.5px;color:#ffffff;-webkit-text-stroke:0.42px #ffffff;">S</span><span class="t" style="left:433.60px;top:9.03px;font-size:16.5px;color:#ffffff;-webkit-text-stroke:0.42px #ffffff;">a</span><span class="t" style="left:444.40px;top:9.03px;font-size:16.5px;color:#ffffff;-webkit-text-stroke:0.42px #ffffff;">&#47;</span><span class="t" style="left:451.54px;top:9.03px;font-size:16.5px;color:#ffffff;-webkit-text-stroke:0.42px #ffffff;">s</span><div style="position:absolute;left:0;top:0;width:800px;height:23.6px;overflow:hidden"><span class="t" style="left:483.41px;top:8.03px;font-size:16.5px;color:#ffffff;transform:scaleX(1.04);-webkit-text-stroke:0.42px #ffffff;">4</span><span class="t" style="left:493.59px;top:8.03px;font-size:16.5px;color:#ffffff;transform:scaleX(1.04);-webkit-text-stroke:0.42px #ffffff;">K</span><span class="t" style="left:506.59px;top:8.03px;font-size:16.5px;color:#ffffff;transform:scaleX(1.04);-webkit-text-stroke:0.42px #ffffff;">p</span><span class="t" style="left:517.84px;top:8.03px;font-size:16.5px;color:#ffffff;transform:scaleX(1.04);-webkit-text-stroke:0.42px #ffffff;">t</span></div><span class="t" style="left:556.69px;top:6.25px;font-size:20.5px;color:#04141a;font-weight:bold;transform:scaleX(1.1);-webkit-text-stroke:0.2px #04141a;">D</span><span class="t" style="left:598.14px;top:9.03px;font-size:16.5px;color:#ffffff;transform:scaleX(1.03);-webkit-text-stroke:0.42px #ffffff;">0</span><span class="t" style="left:608.35px;top:9.03px;font-size:16.5px;color:#ffffff;transform:scaleX(1.03);-webkit-text-stroke:0.42px #ffffff;">.</span><span class="t" style="left:613.94px;top:9.03px;font-size:16.5px;color:#ffffff;transform:scaleX(1.03);-webkit-text-stroke:0.42px #ffffff;">0</span><span class="t" style="left:624.74px;top:9.03px;font-size:16.5px;color:#ffffff;transform:scaleX(1.03);-webkit-text-stroke:0.42px #ffffff;">0</span><span class="t" style="left:635.03px;top:9.03px;font-size:16.5px;color:#ffffff;transform:scaleX(1.03);-webkit-text-stroke:0.42px #ffffff;">s</span><span class="t" style="left:673.46px;top:6.55px;font-size:20.5px;color:#04141a;font-weight:bold;transform:scaleX(1.06);-webkit-text-stroke:0.2px #04141a;">T</span><span class="t" style="left:694.28px;top:10.73px;font-size:16.5px;color:#f8f850;-webkit-text-stroke:0.3px #f8f850;">8</span><span class="t" style="left:705.26px;top:10.73px;font-size:16.5px;color:#f8f850;-webkit-text-stroke:0.3px #f8f850;">0</span><span class="t" style="left:715.36px;top:10.73px;font-size:16.5px;color:#f8f850;-webkit-text-stroke:0.3px #f8f850;">0</span><span class="t" style="left:725.30px;top:10.73px;font-size:16.5px;color:#f8f850;-webkit-text-stroke:0.3px #f8f850;">m</span><span class="t" style="left:741.23px;top:10.73px;font-size:16.5px;color:#f8f850;-webkit-text-stroke:0.3px #f8f850;">V</span>
<div class="t wm" style="left:20px;top:89.1px;font-size:12px">Bryan1</div>
<div class="t wm" style="left:20px;top:110.6px;font-size:10.67px">www.thebackshed.com</div>
<div class="t wm" style="left:20px;top:125.7px;font-size:10.67px;transform:scaleX(.96)">2026-03-11</div>
<div style="position:absolute;left:36px;top:84px;width:29px;height:56px;overflow:hidden;background:#f8f400">
<div class="t" style="left:-15.5px;top:5.6px;font-size:12px;color:#806c10;-webkit-text-stroke:.2px #806c10">Bryan1</div>
<div class="t" style="left:-15.5px;top:27.1px;font-size:10.67px;color:#806c10;-webkit-text-stroke:.2px #806c10">www.thebackshed.com</div>
<div class="t" style="left:-15.5px;top:42.2px;font-size:10.67px;color:#806c10;-webkit-text-stroke:.2px #806c10;transform:scaleX(.96)">2026-03-11</div>
</div>
<div class="t" id="m2" style="left:0.6px;top:375.3px;font-size:13.5px;color:#006000">2</div>

<div class="box" style="left:16px;top:438px;width:198px;height:36px;background:#f8f400"></div>
<div class="box" style="left:221px;top:438px;width:198px;height:36px;background:#14f414"></div>
<div class="box" style="left:426px;top:438px;width:198px;height:36px;background:#fa0a72"></div>
<span class="t" style="left:39.08px;top:447.32px;font-size:23.6px;color:#141200;font-weight:bold;transform:scaleX(0.71);-webkit-text-stroke:0.5px #141200;">D</span><span class="t" style="left:54.17px;top:447.32px;font-size:23.6px;color:#141200;font-weight:bold;transform:scaleX(0.75);-webkit-text-stroke:0.5px #141200;">C</span><span class="t" style="left:183.15px;top:448.38px;font-size:22px;color:#141200;transform:scaleX(0.97);-webkit-text-stroke:0.25px #141200;">5</span><span class="t" style="left:196.61px;top:448.38px;font-size:22px;color:#141200;transform:scaleX(0.97);-webkit-text-stroke:0.25px #141200;">V</span><span class="t" style="left:226.52px;top:442.04px;font-size:29.6px;color:#062a06;transform:scaleX(0.93);-webkit-text-stroke:0.6px #062a06;">2</span><span class="t" style="left:243.80px;top:447.56px;font-size:23.2px;color:#062a06;font-weight:bold;transform:scaleX(0.71);-webkit-text-stroke:0.55px #062a06;">D</span><span class="t" style="left:259.62px;top:447.56px;font-size:23.2px;color:#062a06;font-weight:bold;transform:scaleX(0.71);-webkit-text-stroke:0.55px #062a06;">C</span><span class="t" style="left:388.26px;top:448.38px;font-size:22px;color:#062a06;transform:scaleX(0.95);-webkit-text-stroke:0.25px #062a06;">5</span><span class="t" style="left:401.41px;top:448.38px;font-size:22px;color:#062a06;transform:scaleX(0.95);-webkit-text-stroke:0.25px #062a06;">V</span><span class="t" style="left:431.66px;top:441.03px;font-size:29.5px;color:#3c0014;transform:scaleX(0.97);-webkit-text-stroke:0.45px #3c0014;">G</span><span class="t" style="left:527.59px;top:441.24px;font-size:14.6px;color:#3c0014;font-weight:bold;transform:scaleX(0.88);-webkit-text-stroke:0.4px #3c0014;">1</span><span class="t" style="left:536.01px;top:441.24px;font-size:14.6px;color:#3c0014;font-weight:bold;transform:scaleX(1.2);-webkit-text-stroke:0.4px #3c0014;">.</span><span class="t" style="left:541.21px;top:441.24px;font-size:14.6px;color:#3c0014;font-weight:bold;transform:scaleX(1.2);-webkit-text-stroke:0.4px #3c0014;">0</span><span class="t" style="left:552.91px;top:441.24px;font-size:14.6px;color:#3c0014;font-weight:bold;transform:scaleX(1.2);-webkit-text-stroke:0.4px #3c0014;">0</span><span class="t" style="left:564.13px;top:441.24px;font-size:14.6px;color:#3c0014;font-weight:bold;transform:scaleX(1.2);-webkit-text-stroke:0.4px #3c0014;">K</span><span class="t" style="left:577.93px;top:441.24px;font-size:14.6px;color:#3c0014;font-weight:bold;transform:scaleX(1.2);-webkit-text-stroke:0.4px #3c0014;">H</span><span class="t" style="left:591.10px;top:441.24px;font-size:14.6px;color:#3c0014;font-weight:bold;transform:scaleX(1.2);-webkit-text-stroke:0.4px #3c0014;">z</span><span class="t" style="left:466.59px;top:456.84px;font-size:14.6px;color:#3c0014;font-weight:bold;transform:scaleX(0.88);-webkit-text-stroke:0.4px #3c0014;">1</span><span class="t" style="left:475.71px;top:456.84px;font-size:14.6px;color:#3c0014;font-weight:bold;transform:scaleX(1.2);-webkit-text-stroke:0.4px #3c0014;">.</span><span class="t" style="left:480.66px;top:456.84px;font-size:14.6px;color:#3c0014;font-weight:bold;transform:scaleX(1.2);-webkit-text-stroke:0.4px #3c0014;">5</span><span class="t" style="left:492.41px;top:456.84px;font-size:14.6px;color:#3c0014;font-weight:bold;transform:scaleX(1.2);-webkit-text-stroke:0.4px #3c0014;">0</span><span class="t" style="left:503.48px;top:456.84px;font-size:14.6px;color:#3c0014;font-weight:bold;transform:scaleX(1.2);-webkit-text-stroke:0.4px #3c0014;">V</span><span class="t" style="left:517.35px;top:456.84px;font-size:14.6px;color:#3c0014;font-weight:bold;transform:scaleX(1.2);-webkit-text-stroke:0.4px #3c0014;">p</span><span class="t" style="left:528.45px;top:456.84px;font-size:14.6px;color:#3c0014;font-weight:bold;transform:scaleX(1.2);-webkit-text-stroke:0.4px #3c0014;">p</span><span class="t" style="left:551.21px;top:456.84px;font-size:14.6px;color:#3c0014;font-weight:bold;transform:scaleX(1.2);-webkit-text-stroke:0.4px #3c0014;">0</span><span class="t" style="left:561.55px;top:456.84px;font-size:14.6px;color:#3c0014;font-weight:bold;transform:scaleX(1.2);-webkit-text-stroke:0.4px #3c0014;">m</span><span class="t" style="left:576.93px;top:456.84px;font-size:14.6px;color:#3c0014;font-weight:bold;transform:scaleX(1.2);-webkit-text-stroke:0.4px #3c0014;">v</span>
<svg width="800" height="480" viewBox="0 0 800 480" style="position:absolute;left:0;top:0">
<path d="M30,446.4h3v20.2h-3v-16q-2,2.2 -4.9,3.6v-2.9q3.3,-1.8 4.9,-4.9z" fill="#141200"/>
<path d="M467.5,447.5V441.5H486.5V451.5H501.5V445" fill="none" stroke="#3c0014" stroke-width="2.2"/>
<path d="M649.4,452.3L646.2,469.7H638Q630,468.6 630,461.4Q630.6,453.2 641,452.3z" fill="#2864e8"/>
<path d="M650.4,455.4h6.5l-2.3,12h-6.5z" fill="#fff"/>
<path d="M652.2,457.4h2.7l-.5,2.8h-2.7z M651.1,462.5h2.8l-.55,3h-2.8z" fill="#000"/>
</svg>
</div></body></html>
